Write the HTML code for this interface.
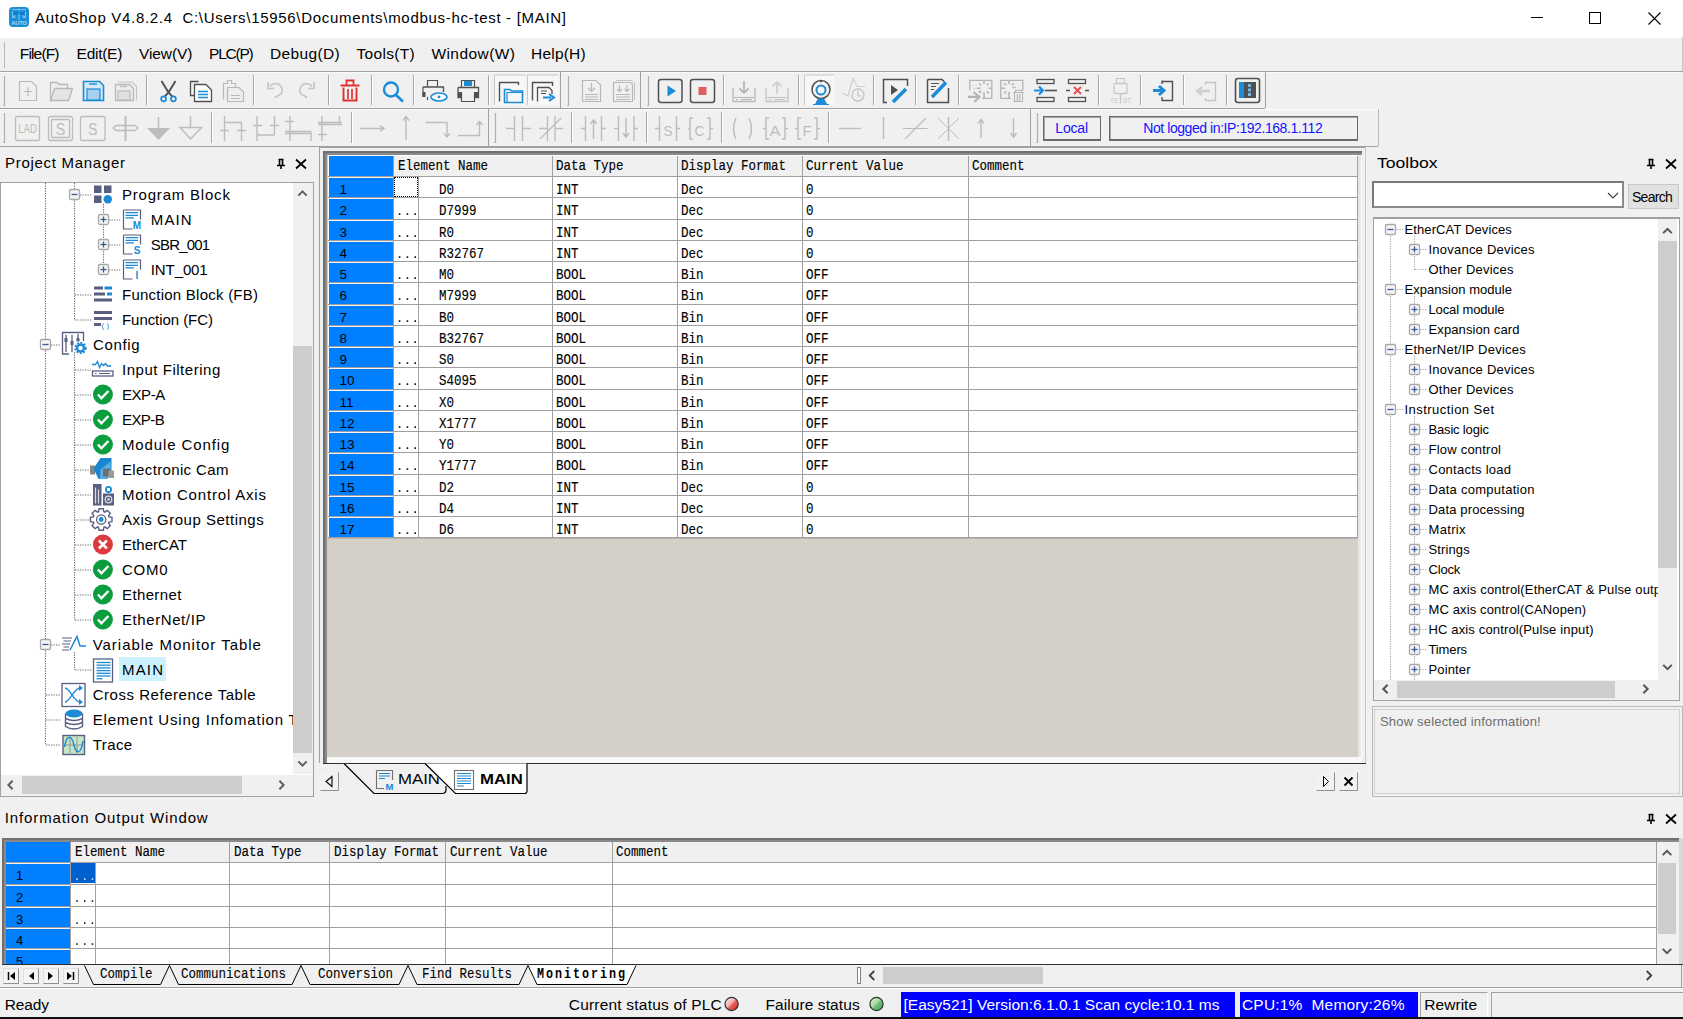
<!DOCTYPE html><html><head><meta charset="utf-8"><style>
html,body{margin:0;padding:0;width:1683px;height:1019px;overflow:hidden;background:#f0f0f0;position:relative;font-family:"Liberation Sans",sans-serif;}
.t{position:absolute;white-space:pre;line-height:1;color:#000;}
svg{overflow:visible;position:absolute}
</style></head><body>
<div style="position:absolute;left:0px;top:0px;width:1683px;height:38px;background:#fff"></div>
<svg style="left:9px;top:7px" width="20" height="20"><rect x="0" y="0" width="20" height="20" rx="4" fill="#1c8fd8"/><path d="M3 2.5H17M10 1.5V4M3.5 4.5V10.5H6.5M16.5 4.5V10.5H13.5M4 10.5L6.5 8.5M16 10.5L13.5 8.5M10 7V13" stroke="#6ec0ee" stroke-width="1.2" fill="none"/><rect x="5" y="5" width="4" height="3" fill="#0d7cc8"/><rect x="11" y="5" width="4.5" height="3" fill="#0d7cc8"/><text x="10" y="18" text-anchor="middle" font-family="Liberation Sans" font-weight="bold" font-size="5.5" fill="#a8daf6">AUTO</text></svg>
<div class="t" style="left:35.00px;top:10.10px;font-size:15px;letter-spacing:0.693px;">AutoShop V4.8.2.4  C:\Users\15956\Documents\modbus-hc-test - [MAIN]</div>
<div style="position:absolute;left:1531px;top:17px;width:12px;height:1px;background:#000"></div>
<div style="position:absolute;left:1589px;top:12px;width:10px;height:10px;border:1px solid #000"></div>
<svg style="left:1648px;top:12px" width="13" height="13"><path d="M0.5 0.5L12.5 12.5M12.5 0.5L0.5 12.5" stroke="#000" stroke-width="1.1"/></svg>
<div style="position:absolute;left:4px;top:42px;width:1px;height:26px;background:#b8b8b8"></div>
<div class="t" style="left:19.80px;top:46.28px;font-size:15.5px;letter-spacing:-0.849px;">File(F)</div>
<div class="t" style="left:76.60px;top:46.28px;font-size:15.5px;letter-spacing:-0.275px;">Edit(E)</div>
<div class="t" style="left:139.00px;top:46.28px;font-size:15.5px;letter-spacing:-0.086px;">View(V)</div>
<div class="t" style="left:209.00px;top:46.28px;font-size:15.5px;letter-spacing:-1.208px;">PLC(P)</div>
<div class="t" style="left:270.00px;top:46.28px;font-size:15.5px;letter-spacing:0.358px;">Debug(D)</div>
<div class="t" style="left:356.50px;top:46.28px;font-size:15.5px;letter-spacing:0.306px;">Tools(T)</div>
<div class="t" style="left:431.40px;top:46.28px;font-size:15.5px;letter-spacing:0.443px;">Window(W)</div>
<div class="t" style="left:531.00px;top:46.28px;font-size:15.5px;letter-spacing:0.217px;">Help(H)</div>
<div style="position:absolute;left:1682px;top:37px;width:1px;height:34px;background:#c8c8c8"></div>
<div style="position:absolute;left:0px;top:71px;width:1683px;height:1px;background:#a0a0a0"></div>
<div style="position:absolute;left:0px;top:72px;width:1683px;height:1px;background:#fafafa"></div>
<div style="position:absolute;left:0px;top:108px;width:1265px;height:1px;background:#a0a0a0"></div>
<div style="position:absolute;left:0px;top:109px;width:1265px;height:1px;background:#fafafa"></div>
<div style="position:absolute;left:1265px;top:109px;width:114px;height:1px;background:#fcfcfc"></div>
<div style="position:absolute;left:1378px;top:109px;width:1px;height:37px;background:#b8b8b8"></div>
<div style="position:absolute;left:0px;top:146px;width:1378px;height:1px;background:#a0a0a0"></div>
<svg style="left:0;top:0" width="1683" height="1019" viewBox="0 0 1683 1019"><path d="M4.5 76V106M3 105.5H5" stroke="#b0b0b0" stroke-width="1.2"/><path d="M19.5 81.5H31.5L36.5 86.5V100.5H19.5Z" fill="none" stroke="#b8b8b8" stroke-width="1.2"/><path d="M28 87V96M23.5 91.5H32.5" stroke="#b8b8b8" stroke-width="1.2"/><path d="M50.5 100.5V82.5H57l2 2H67.5V88" fill="none" stroke="#b8b8b8" stroke-width="1.3"/><path d="M50.5 100.5L54.5 88.5H72.5L68.5 100.5Z" fill="#e4e4e4" stroke="#b8b8b8" stroke-width="1.3"/><path d="M83.5 81.5H99.5L103.5 85.5V100.5H83.5Z" fill="#d7e9f7" stroke="#1a8cd8" stroke-width="1.6"/><rect x="87" y="89" width="13" height="11" fill="#a9d0f0" stroke="#1a8cd8" stroke-width="1.2"/><path d="M89 84H97" stroke="#1a8cd8" stroke-width="1.4"/><path d="M118 82H132L136.5 86.5V100.5" fill="none" stroke="#c4c4c4" stroke-width="1.1"/><path d="M115.5 84.5H129.5L133.5 88.5V100.5H115.5Z" fill="#ececec" stroke="#b8b8b8" stroke-width="1.3"/><rect x="118" y="91" width="12" height="9" fill="#e0e0e0" stroke="#b8b8b8" stroke-width="1.1"/><path d="M120 86.5H127" stroke="#b8b8b8" stroke-width="1.2"/><path d="M146.5 75V105" stroke="#a8a8a8" stroke-width="1"/><path d="M147.5 75V105" stroke="#fff" stroke-width="1"/><path d="M161.5 81L168.5 92.5L164.8 96.5M175.5 81L168.5 92.5L172.2 96.5" fill="none" stroke="#505050" stroke-width="1.9"/><circle cx="163.6" cy="98.8" r="2.5" fill="none" stroke="#1a8cd8" stroke-width="1.7"/><circle cx="173.4" cy="98.8" r="2.5" fill="none" stroke="#1a8cd8" stroke-width="1.7"/><path d="M198.5 81.5H190.5V95.5H194" fill="none" stroke="#505050" stroke-width="1.3"/><path d="M194.5 84.5H206L211.5 90V101.5H194.5Z" fill="#fff" stroke="#505050" stroke-width="1.3"/><path d="M198 91.5H208M198 94.5H208M198 97.5H208" stroke="#1a8cd8" stroke-width="1.3"/><path d="M223.5 99.5V83.5H227.5V80.5H231.5V83.5H235.5V87" fill="none" stroke="#b8b8b8" stroke-width="1.2"/><path d="M227.5 87.5H239L243.5 92V101.5H227.5Z" fill="#eee" stroke="#b8b8b8" stroke-width="1.2"/><path d="M231 95.5H240M231 98.5H240" stroke="#b8b8b8" stroke-width="1.1"/><path d="M253.5 75V105" stroke="#a8a8a8" stroke-width="1"/><path d="M254.5 75V105" stroke="#fff" stroke-width="1"/><path d="M275 97.5L281 94A6.5 6.5 0 1 0 270 86.5" fill="none" stroke="#c4c4c4" stroke-width="1.6"/><path d="M268 82V88.5H274" fill="none" stroke="#c4c4c4" stroke-width="1.6"/><path d="M307 97.5L301 94A6.5 6.5 0 1 1 312 86.5" fill="none" stroke="#c4c4c4" stroke-width="1.6"/><path d="M314 82V88.5H308" fill="none" stroke="#c4c4c4" stroke-width="1.6"/><path d="M328.5 75V105" stroke="#a8a8a8" stroke-width="1"/><path d="M329.5 75V105" stroke="#fff" stroke-width="1"/><path d="M340.5 85.5H359.5M346.5 85V80.5H353.5V85" fill="none" stroke="#dd3333" stroke-width="1.8"/><path d="M343.5 87.5V100.5H356.5V87.5" fill="none" stroke="#dd3333" stroke-width="1.9"/><path d="M348 89V99M352 89V99" stroke="#dd3333" stroke-width="1.7"/><path d="M371.5 75V105" stroke="#a8a8a8" stroke-width="1"/><path d="M372.5 75V105" stroke="#fff" stroke-width="1"/><circle cx="391" cy="89.5" r="7" fill="none" stroke="#1a8cd8" stroke-width="2.4"/><path d="M396 95L403 101.5" stroke="#1a8cd8" stroke-width="2.6"/><path d="M413.5 75V105" stroke="#a8a8a8" stroke-width="1"/><path d="M414.5 75V105" stroke="#fff" stroke-width="1"/><path d="M427.5 86.5V80.5H437.5V86.5" fill="none" stroke="#505050" stroke-width="1.2"/><path d="M423 87H443.5V92" fill="none" stroke="#505050" stroke-width="1.3"/><rect x="422.5" y="92" width="3" height="5" fill="#505050"/><path d="M423 87V97M427.5 97V100" stroke="#505050" stroke-width="1.2"/><ellipse cx="439" cy="97" rx="8" ry="4" fill="#fff" stroke="#1a8cd8" stroke-width="1.6"/><circle cx="439" cy="97" r="1.4" fill="#1a8cd8"/><path d="M461.5 87V80.5H474.5V87" fill="none" stroke="#505050" stroke-width="1.2"/><rect x="464" y="81" width="8" height="5" fill="#1a8cd8"/><path d="M458 87.5H478.5V97.5H474.5M458 87.5V97.5H461.5" fill="none" stroke="#505050" stroke-width="1.3"/><rect x="458" y="92" width="4" height="5" fill="#505050"/><rect x="474" y="92" width="4" height="5" fill="#505050"/><path d="M461.5 93V101.5H474.5V93" fill="none" stroke="#505050" stroke-width="1.2"/><path d="M488.5 75V105" stroke="#a8a8a8" stroke-width="1"/><path d="M489.5 75V105" stroke="#fff" stroke-width="1"/><rect x="494.5" y="74.5" width="31" height="31" fill="#f7f7f7" stroke="none"/><path d="M494.5 105V75H525" fill="none" stroke="#c8c8c8" stroke-width="1"/><rect x="527.5" y="74.5" width="31" height="31" fill="#f7f7f7" stroke="none"/><path d="M527.5 105V75H558" fill="none" stroke="#c8c8c8" stroke-width="1"/><path d="M499.5 101.5V82.5H518.5V85" fill="none" stroke="#505050" stroke-width="1.4"/><path d="M504.5 102.5V89.5H510l1.5 1.5H522.5V102.5Z" fill="none" stroke="#1a8cd8" stroke-width="1.6"/><path d="M507 102V92.5H522" fill="none" stroke="#1a8cd8" stroke-width="1.2"/><path d="M532.5 100.5V82.5H552.5V86" fill="none" stroke="#505050" stroke-width="1.4"/><path d="M537.5 101.5V87.5H549L552 90.5V94" fill="none" stroke="#505050" stroke-width="1.3"/><path d="M541 91H547M541 93.5H546" stroke="#505050" stroke-width="1"/><path d="M543 97.5H551M549 94L554 97.5L549 101" fill="none" stroke="#1a8cd8" stroke-width="2"/><path d="M560.5 72V108" stroke="#a0a0a0"/><path d="M568.5 76V106M567 105.5H569" stroke="#b0b0b0" stroke-width="1.2"/><path d="M582.5 80.5H596L600.5 85V101.5H582.5Z" fill="none" stroke="#b8b8b8" stroke-width="1.2"/><path d="M591.5 83V91M588 88L591.5 91.5L595 88" fill="none" stroke="#b8b8b8" stroke-width="1.2"/><path d="M585 94.5H598M585 97H598M585 99.5H598" stroke="#b8b8b8" stroke-width="1"/><path d="M616 80.5H632L634.5 83V100" fill="none" stroke="#c4c4c4" stroke-width="1"/><path d="M613.5 82.5H630.5L632.5 84.5V101.5H613.5Z" fill="none" stroke="#b8b8b8" stroke-width="1.2"/><path d="M619.5 85V91M617 89L619.5 91.5L622 89M627 85V91M624.5 89L627 91.5L629.5 89" fill="none" stroke="#b8b8b8" stroke-width="1.1"/><path d="M616 94.5H630M616 97H630M616 99.5H630" stroke="#b8b8b8" stroke-width="1"/><path d="M640.5 72V108" stroke="#a0a0a0"/><path d="M648.5 76V106M647 105.5H649" stroke="#b0b0b0" stroke-width="1.2"/><rect x="658.5" y="79.5" width="23.5" height="23" rx="2.5" fill="none" stroke="#505050" stroke-width="1.5"/><path d="M667.5 85.5V96.5L676 91Z" fill="#1a8cd8"/><rect x="690.5" y="79.5" width="24" height="23" rx="2.5" fill="none" stroke="#505050" stroke-width="1.5"/><rect x="698.5" y="87" width="8" height="8" fill="#e06060"/><path d="M723.5 75V105" stroke="#a8a8a8" stroke-width="1"/><path d="M724.5 75V105" stroke="#fff" stroke-width="1"/><path d="M733 88V101.5H755V88" fill="none" stroke="#b8b8b8" stroke-width="1.3"/><path d="M733 97.5H755" stroke="#b8b8b8" stroke-width="1.1"/><path d="M736 99.5H738M741 99.5H752" stroke="#b8b8b8" stroke-width="1.2"/><path d="M744 81V93M739.5 88.5L744 93L748.5 88.5" fill="none" stroke="#b8b8b8" stroke-width="1.8"/><path d="M766 88V101.5H788V88" fill="none" stroke="#c4c4c4" stroke-width="1.3"/><path d="M766 97.5H788" stroke="#c4c4c4" stroke-width="1.1"/><path d="M769 99.5H771M774 99.5H785" stroke="#c4c4c4" stroke-width="1.2"/><path d="M777 94V82M772.5 86.5L777 82L781.5 86.5" fill="none" stroke="#d0d0d0" stroke-width="1.8"/><path d="M798.5 75V105" stroke="#a8a8a8" stroke-width="1"/><path d="M799.5 75V105" stroke="#fff" stroke-width="1"/><rect x="804.5" y="74.5" width="30" height="31" fill="#f7f7f7"/><path d="M804.5 105V75H834" fill="none" stroke="#c8c8c8"/><circle cx="821" cy="89.5" r="9" fill="none" stroke="#505050" stroke-width="1.5"/><circle cx="821" cy="90" r="4.5" fill="none" stroke="#1a8cd8" stroke-width="2"/><circle cx="821" cy="81.5" r="1" fill="#505050"/><path d="M818 98.5H824L827 104H815Z" fill="#1a8cd8"/><path d="M813 104.5H829" stroke="#1a8cd8" stroke-width="1"/><path d="M842 93L848 96L853 78.5L857 86.5H865" fill="none" stroke="#d0d0d0" stroke-width="1.2"/><circle cx="858" cy="95" r="6" fill="#f0f0f0" stroke="#c4c4c4" stroke-width="1.4"/><path d="M858 91V96H861.5" fill="none" stroke="#c4c4c4" stroke-width="1.2"/><path d="M873.5 75V105" stroke="#a8a8a8" stroke-width="1"/><path d="M874.5 75V105" stroke="#fff" stroke-width="1"/><path d="M887 102.5H883.5V79.5H907.5V86" fill="none" stroke="#505050" stroke-width="1.5"/><path d="M891 85V95L898 90Z" fill="#505050"/><path d="M893 102L906 89" stroke="#1a8cd8" stroke-width="3.5"/><path d="M915.5 75V105" stroke="#a8a8a8" stroke-width="1"/><path d="M916.5 75V105" stroke="#fff" stroke-width="1"/><path d="M927.5 79.5H942L944.5 82M948.5 88V102.5H927.5V79.5" fill="none" stroke="#505050" stroke-width="1.5"/><path d="M931 83.5H939M931 86.5H936M931 89.5H934" stroke="#505050" stroke-width="1"/><path d="M932 97L946 82.5" stroke="#1a8cd8" stroke-width="3.5"/><path d="M958.5 75V105" stroke="#a8a8a8" stroke-width="1"/><path d="M959.5 75V105" stroke="#fff" stroke-width="1"/><path d="M969.8 90.5V80.3H991.8V98.3H982" fill="none" stroke="#b4b4b4" stroke-width="1.3"/><path d="M984 80.5V84M984 92V98M977 88.2H980.5M988.5 88.2H992M979.2 83.2L981.2 85.2M988.8 83.2L986.8 85.2M986.8 91.2L988.8 93.4" stroke="#b4b4b4" stroke-width="1.5"/><path d="M973 85.5h1.2M973 88.5h1.2M975.5 85.5h1M975.5 88.5h1" stroke="#c8c8c8" stroke-width="1"/><path d="M968 96.8H978.5M973.5 92L979.5 96.8L974.5 101.8M979 92.5L981 91" fill="none" stroke="#b4b4b4" stroke-width="2.2"/><path d="M1011 98.3H1000.8V80.3H1022.8V90.5" fill="none" stroke="#b4b4b4" stroke-width="1.3"/><path d="M1009 80.5V84M1009 92V98M1001.5 88.2H1005M1004.2 83.2L1006.2 85.2M1013.8 83.2L1011.8 85.2M1004.2 93.4L1006.2 91.2M1012.5 87.5H1015.5" stroke="#b4b4b4" stroke-width="1.5"/><path d="M1013 92.5H1024M1015.5 92V90.3H1021.5V92M1014.5 93V101.5H1022.5V93M1017.3 94V101M1019.7 94V101" fill="none" stroke="#b4b4b4" stroke-width="1.1"/><rect x="1037" y="79.5" width="17" height="4" fill="none" stroke="#505050" stroke-width="1.3"/><rect x="1037" y="97.5" width="17" height="4" fill="none" stroke="#505050" stroke-width="1.3"/><path d="M1045 90.5H1057" stroke="#505050" stroke-width="1.6"/><path d="M1034 90.5H1042M1039 86.5L1043 90.5L1039 94.5" fill="none" stroke="#1a8cd8" stroke-width="2.2"/><rect x="1068.5" y="79.5" width="17" height="4" fill="none" stroke="#505050" stroke-width="1.3"/><rect x="1068.5" y="97.5" width="17" height="4" fill="none" stroke="#505050" stroke-width="1.3"/><path d="M1066 90.5H1070M1085 90.5H1089" stroke="#505050" stroke-width="1.6"/><path d="M1074 87L1081 94M1081 87L1074 94" stroke="#e05050" stroke-width="2"/><path d="M1098.5 75V105" stroke="#a8a8a8" stroke-width="1"/><path d="M1099.5 75V105" stroke="#fff" stroke-width="1"/><rect x="1116.5" y="78.5" width="8" height="5" fill="none" stroke="#c8c8c8" stroke-width="1.1"/><rect x="1114" y="83.5" width="13" height="10" rx="1" fill="none" stroke="#c8c8c8" stroke-width="1.3"/><path d="M1120.5 94V103.5" stroke="#c8c8c8" stroke-width="1.4"/><text x="1110" y="103" font-family="Liberation Sans" font-size="6.5" fill="#c8c8c8">TE</text><text x="1123" y="103" font-family="Liberation Sans" font-size="6.5" fill="#c8c8c8">ST</text><path d="M1140.5 75V105" stroke="#a8a8a8" stroke-width="1"/><path d="M1141.5 75V105" stroke="#fff" stroke-width="1"/><path d="M1162 81.5H1172.5V100.5H1162M1162 80.5V84M1162 97V101" fill="none" stroke="#505050" stroke-width="1.4"/><path d="M1153 90.5H1162M1159 86L1164 90.5L1159 95" fill="none" stroke="#1a8cd8" stroke-width="3"/><path d="M1183.5 75V105" stroke="#a8a8a8" stroke-width="1"/><path d="M1184.5 75V105" stroke="#fff" stroke-width="1"/><path d="M1205.5 82.5H1215.5V100.5H1205.5M1205.5 82V85M1205.5 98V101" fill="none" stroke="#c4c4c4" stroke-width="1.3"/><path d="M1198 91H1210M1202 87L1197.5 91L1202 95" fill="none" stroke="#d0d0d0" stroke-width="3"/><path d="M1226.5 75V105" stroke="#a8a8a8" stroke-width="1"/><path d="M1227.5 75V105" stroke="#fff" stroke-width="1"/><rect x="1235.5" y="78.5" width="24" height="24" rx="2.5" fill="none" stroke="#505050" stroke-width="1.6"/><rect x="1239" y="82" width="5" height="16" fill="#1a8cd8"/><rect x="1244" y="82" width="12" height="16" fill="#505050"/><rect x="1248" y="84" width="3" height="3" fill="#7ab8e6"/><rect x="1248" y="88.5" width="3" height="3" fill="#7ab8e6"/><rect x="1248" y="93" width="3" height="3" fill="#7ab8e6"/><path d="M1265.5 72V108" stroke="#a0a0a0"/><path d="M4.5 113V143M3 142.5H5" stroke="#b0b0b0" stroke-width="1.2"/><rect x="15.5" y="116.5" width="24" height="24" rx="2" fill="none" stroke="#bcbcbc" stroke-width="1.3"/><text x="18.3" y="133.3" font-family="Liberation Sans" font-size="13.5" fill="#bcbcbc" textLength="18.5" lengthAdjust="spacingAndGlyphs">LAD</text><rect x="48.5" y="116.5" width="24" height="24" rx="2" fill="none" stroke="#bcbcbc" stroke-width="1.3"/><rect x="51.5" y="119.5" width="18" height="18" rx="1" fill="none" stroke="#bcbcbc" stroke-width="1.3"/><text x="55.8" y="135" font-family="Liberation Sans" font-size="16" fill="#bcbcbc" textLength="9.5" lengthAdjust="spacingAndGlyphs">S</text><rect x="80.5" y="116.5" width="24.5" height="24" rx="2" fill="none" stroke="#bcbcbc" stroke-width="1.3"/><text x="88" y="135" font-family="Liberation Sans" font-size="16" fill="#bcbcbc" textLength="9.5" lengthAdjust="spacingAndGlyphs">S</text><path d="M125.5 116V141" stroke="#bcbcbc" stroke-width="2"/><path d="M113 128L116 125.5H135L138 128L135 130.5H116Z" fill="#f0f0f0" stroke="#bcbcbc" stroke-width="1.3"/><path d="M125.5 125V131" stroke="#bcbcbc" stroke-width="2"/><path d="M158.5 117V128" stroke="#bcbcbc" stroke-width="1.5"/><path d="M147 128H170L158.5 140Z" fill="#bcbcbc"/><path d="M190.5 116V127.5" stroke="#bcbcbc" stroke-width="1.5"/><path d="M180 127.5H201.5L190.5 139Z" fill="none" stroke="#bcbcbc" stroke-width="1.5"/><path d="M211.5 112V143" stroke="#a8a8a8" stroke-width="1"/><path d="M212.5 112V143" stroke="#fff" stroke-width="1"/><path d="M224.5 116V141M241.5 122V141M224.5 122.5H241.5M220 130.5H229M237 130.5H246" fill="none" stroke="#bcbcbc" stroke-width="1.4"/><path d="M257 116V141M274.5 116V135M257 135H274.5M253 125.5H262M270 125.5H279" fill="none" stroke="#bcbcbc" stroke-width="1.4"/><path d="M290 116V141M311 131.5V141M285 131.5H311M285 133.5H311M285 121.5H294" fill="none" stroke="#bcbcbc" stroke-width="1.4"/><path d="M322 116V141M339.5 116V122M318 122.5H342M318 124.5H342M318 134.5H327" fill="none" stroke="#bcbcbc" stroke-width="1.4"/><path d="M351.5 112V143" stroke="#a8a8a8" stroke-width="1"/><path d="M352.5 112V143" stroke="#fff" stroke-width="1"/><path d="M360 128.5H384M380 125.5L384 128.5L380 131.5" fill="none" stroke="#bcbcbc" stroke-width="1.4"/><path d="M406 140V116.5M403 120.5L406 116.5L409 120.5" fill="none" stroke="#bcbcbc" stroke-width="1.4"/><path d="M425.5 122.5H447V137M444 133.5L447 137L450 133.5" fill="none" stroke="#bcbcbc" stroke-width="1.4"/><path d="M458 135.5H479.5V122M476.5 125L479.5 121.5L482.5 125" fill="none" stroke="#bcbcbc" stroke-width="1.4"/><path d="M488.5 109V146" stroke="#a0a0a0"/><path d="M495.5 113V143M494 142.5H496" stroke="#b0b0b0" stroke-width="1.2"/><path d="M514.5 116V141M522.5 116V141M506 128.5H514.5M522.5 128.5H531" fill="none" stroke="#bcbcbc" stroke-width="1.4"/><path d="M547.5 116V141M555 116V141M539 128.5H547.5M555 128.5H563M540 139L561 118" fill="none" stroke="#bcbcbc" stroke-width="1.3"/><path d="M571.5 112V143" stroke="#a8a8a8" stroke-width="1"/><path d="M572.5 112V143" stroke="#fff" stroke-width="1"/><path d="M585.5 116V141M601.5 116V141M581 128.5H585.5M601.5 128.5H606M593.5 139V120M590.5 124L593.5 120L596.5 124" fill="none" stroke="#bcbcbc" stroke-width="1.4"/><path d="M618.5 116V141M634 116V141M614 128.5H618.5M634 128.5H638M626 118V137M623 133L626 137L629 133" fill="none" stroke="#bcbcbc" stroke-width="1.4"/><path d="M646.5 112V143" stroke="#a8a8a8" stroke-width="1"/><path d="M647.5 112V143" stroke="#fff" stroke-width="1"/><path d="M659.5 116V141M676.5 116V141M655 128.5H659.5M676.5 128.5H680" fill="none" stroke="#bcbcbc" stroke-width="1.4"/><text x="663.5" y="135.5" font-family="Liberation Sans" font-size="15" fill="#bcbcbc" textLength="9" lengthAdjust="spacingAndGlyphs">S</text><path d="M693 118H690V139H693M707 118H710V139H707M688 128.5H690M710 128.5H713" fill="none" stroke="#bcbcbc" stroke-width="1.4"/><text x="694.5" y="135.5" font-family="Liberation Sans" font-size="15" fill="#bcbcbc" textLength="10" lengthAdjust="spacingAndGlyphs">C</text><path d="M721.5 112V143" stroke="#a8a8a8" stroke-width="1"/><path d="M722.5 112V143" stroke="#fff" stroke-width="1"/><path d="M736 118Q731 128.5 736 139M749 118Q754 128.5 749 139" fill="none" stroke="#bcbcbc" stroke-width="1.4"/><path d="M769 118H766V139H769M782 118H785V139H782M763 128.5H766M785 128.5H788" fill="none" stroke="#bcbcbc" stroke-width="1.4"/><text x="769.5" y="135.5" font-family="Liberation Sans" font-size="15" fill="#bcbcbc" textLength="11" lengthAdjust="spacingAndGlyphs">A</text><path d="M801 118H798V139H801M814 118H817V139H814M795 128.5H798M817 128.5H820" fill="none" stroke="#bcbcbc" stroke-width="1.4"/><text x="802.5" y="135.5" font-family="Liberation Sans" font-size="15" fill="#bcbcbc" textLength="9" lengthAdjust="spacingAndGlyphs">F</text><path d="M828.5 112V143" stroke="#a8a8a8" stroke-width="1"/><path d="M829.5 112V143" stroke="#fff" stroke-width="1"/><path d="M839 128.5H861" stroke="#bcbcbc" stroke-width="1.4"/><path d="M883.5 117V139" stroke="#bcbcbc" stroke-width="1.4"/><path d="M903 128.5H927.5M905 139L926 118" fill="none" stroke="#bcbcbc" stroke-width="1.2"/><path d="M948.5 117V141M938 118L959 139M959 118L938 139" fill="none" stroke="#bcbcbc" stroke-width="1.0"/><path d="M948.5 117V141" stroke="#bcbcbc" stroke-width="1.4"/><path d="M981 138V120M978 123.5L981 119.5L984 123.5" fill="none" stroke="#bcbcbc" stroke-width="1.4"/><path d="M1013.5 118V136.5M1010.5 133L1013.5 137L1016.5 133" fill="none" stroke="#bcbcbc" stroke-width="1.4"/><path d="M1030.5 109V146" stroke="#a0a0a0"/><path d="M1037.5 113V143M1036 142.5H1038" stroke="#b0b0b0" stroke-width="1.2"/></svg>
<div style="position:absolute;left:1043px;top:116px;width:58px;height:25px;border:1.3px solid #6a6a6a;border-bottom:2px solid #6a6a6a;box-shadow:inset 1px 1px 0 #a8a8a8;box-sizing:border-box;background:#f0f0f0"></div>
<div class="t" style="left:1055.30px;top:121.25px;font-size:14px;letter-spacing:-0.190px;color:#1414ff;">Local</div>
<div style="position:absolute;left:1109px;top:116px;width:249px;height:25px;border:1.3px solid #6a6a6a;border-bottom:2px solid #6a6a6a;box-shadow:inset 1px 1px 0 #a8a8a8;box-sizing:border-box;background:#f0f0f0"></div>
<div class="t" style="left:1143.30px;top:121.45px;font-size:14px;letter-spacing:-0.435px;color:#1414ff;">Not logged in:IP:192.168.1.112</div>
<div class="t" style="left:5.00px;top:155.00px;font-size:15px;letter-spacing:0.713px;">Project Manager</div>
<svg style="left:0;top:0" width="1683" height="1019" viewBox="0 0 1683 1019"><path d="M278.5 159.5H283.5M279.5 160V165M282.5 160V165M277 165.5H285M281 165.5V169" fill="none" stroke="#000" stroke-width="1.6"/><path d="M296 159.5L306 168.5M306 159.5L296 168.5" stroke="#000" stroke-width="1.8"/></svg>
<div style="position:absolute;left:0px;top:182px;width:314px;height:615px;border:1px solid #a0a0a0;box-sizing:border-box;background:#fff"></div>
<div style="position:absolute;left:293px;top:183px;width:20px;height:591px;background:#f0f0f0"></div>
<div style="position:absolute;left:293px;top:346px;width:19px;height:407px;background:#cdcdcd"></div>
<div style="position:absolute;left:1px;top:775px;width:312px;height:21px;background:#f0f0f0"></div>
<div style="position:absolute;left:22px;top:776px;width:220px;height:18px;background:#cdcdcd"></div>
<svg style="left:0;top:0" width="1683" height="1019" viewBox="0 0 1683 1019"><path d="M298.3 195.6L302.5 191.4L306.7 195.6" fill="none" stroke="#606060" stroke-width="2"/><path d="M298.3 761.4L302.5 765.6L306.7 761.4" fill="none" stroke="#606060" stroke-width="2"/><path d="M12.6 780.8L8.4 785L12.6 789.2" fill="none" stroke="#606060" stroke-width="2"/><path d="M279.4 780.8L283.6 785L279.4 789.2" fill="none" stroke="#606060" stroke-width="2"/></svg>
<div style="position:absolute;left:119px;top:657px;width:47px;height:24px;background:#ccf2ff"></div>
<div style="position:absolute;left:1px;top:183px;width:292px;height:591px;overflow:hidden">
<svg style="left:-1px;top:-183px" width="1683" height="1019" viewBox="0 0 1683 1019"><path d="M45.5 183V745" stroke="#6a6a6a" stroke-width="1.1" stroke-dasharray="1.25 1.25"/><path d="M74.5 183V320" stroke="#6a6a6a" stroke-width="1.1" stroke-dasharray="1.25 1.25"/><path d="M74.5 352V620" stroke="#6a6a6a" stroke-width="1.1" stroke-dasharray="1.25 1.25"/><path d="M74.5 652V670" stroke="#6a6a6a" stroke-width="1.1" stroke-dasharray="1.25 1.25"/><path d="M103.5 204V270" stroke="#6a6a6a" stroke-width="1.1" stroke-dasharray="1.25 1.25"/><path d="M75 195.0H92" stroke="#6a6a6a" stroke-width="1.1" stroke-dasharray="1.25 1.25"/><path d="M75 295.0H92" stroke="#6a6a6a" stroke-width="1.1" stroke-dasharray="1.25 1.25"/><path d="M75 320.0H92" stroke="#6a6a6a" stroke-width="1.1" stroke-dasharray="1.25 1.25"/><path d="M104 220.0H121" stroke="#6a6a6a" stroke-width="1.1" stroke-dasharray="1.25 1.25"/><path d="M104 245.0H121" stroke="#6a6a6a" stroke-width="1.1" stroke-dasharray="1.25 1.25"/><path d="M104 270.0H121" stroke="#6a6a6a" stroke-width="1.1" stroke-dasharray="1.25 1.25"/><path d="M75 370.0H91" stroke="#6a6a6a" stroke-width="1.1" stroke-dasharray="1.25 1.25"/><path d="M75 395.0H91" stroke="#6a6a6a" stroke-width="1.1" stroke-dasharray="1.25 1.25"/><path d="M75 420.0H91" stroke="#6a6a6a" stroke-width="1.1" stroke-dasharray="1.25 1.25"/><path d="M75 445.0H91" stroke="#6a6a6a" stroke-width="1.1" stroke-dasharray="1.25 1.25"/><path d="M75 470.0H91" stroke="#6a6a6a" stroke-width="1.1" stroke-dasharray="1.25 1.25"/><path d="M75 495.0H91" stroke="#6a6a6a" stroke-width="1.1" stroke-dasharray="1.25 1.25"/><path d="M75 520.0H91" stroke="#6a6a6a" stroke-width="1.1" stroke-dasharray="1.25 1.25"/><path d="M75 545.0H91" stroke="#6a6a6a" stroke-width="1.1" stroke-dasharray="1.25 1.25"/><path d="M75 570.0H91" stroke="#6a6a6a" stroke-width="1.1" stroke-dasharray="1.25 1.25"/><path d="M75 595.0H91" stroke="#6a6a6a" stroke-width="1.1" stroke-dasharray="1.25 1.25"/><path d="M75 620.0H91" stroke="#6a6a6a" stroke-width="1.1" stroke-dasharray="1.25 1.25"/><path d="M75 670.0H92" stroke="#6a6a6a" stroke-width="1.1" stroke-dasharray="1.25 1.25"/><path d="M46 345.0H61" stroke="#6a6a6a" stroke-width="1.1" stroke-dasharray="1.25 1.25"/><path d="M46 645.0H61" stroke="#6a6a6a" stroke-width="1.1" stroke-dasharray="1.25 1.25"/><path d="M46 695.0H61" stroke="#6a6a6a" stroke-width="1.1" stroke-dasharray="1.25 1.25"/><path d="M46 720.0H61" stroke="#6a6a6a" stroke-width="1.1" stroke-dasharray="1.25 1.25"/><path d="M46 745.0H61" stroke="#6a6a6a" stroke-width="1.1" stroke-dasharray="1.25 1.25"/><rect x="69.5" y="189.5" width="10" height="10" rx="1.5" fill="#f4f4f4" stroke="#a8a8a8" stroke-width="1.3"/><path d="M71.5 194.5H77.5" stroke="#3c5a9a" stroke-width="1.3"/><rect x="98.5" y="214.5" width="10" height="10" rx="1.5" fill="#f4f4f4" stroke="#a8a8a8" stroke-width="1.3"/><path d="M100.5 219.5H106.5" stroke="#3c5a9a" stroke-width="1.3"/><path d="M103.5 216.5V222.5" stroke="#3c5a9a" stroke-width="1.3"/><rect x="98.5" y="239.5" width="10" height="10" rx="1.5" fill="#f4f4f4" stroke="#a8a8a8" stroke-width="1.3"/><path d="M100.5 244.5H106.5" stroke="#3c5a9a" stroke-width="1.3"/><path d="M103.5 241.5V247.5" stroke="#3c5a9a" stroke-width="1.3"/><rect x="98.5" y="264.5" width="10" height="10" rx="1.5" fill="#f4f4f4" stroke="#a8a8a8" stroke-width="1.3"/><path d="M100.5 269.5H106.5" stroke="#3c5a9a" stroke-width="1.3"/><path d="M103.5 266.5V272.5" stroke="#3c5a9a" stroke-width="1.3"/><rect x="40.5" y="339.5" width="10" height="10" rx="1.5" fill="#f4f4f4" stroke="#a8a8a8" stroke-width="1.3"/><path d="M42.5 344.5H48.5" stroke="#3c5a9a" stroke-width="1.3"/><rect x="40.5" y="639.5" width="10" height="10" rx="1.5" fill="#f4f4f4" stroke="#a8a8a8" stroke-width="1.3"/><path d="M42.5 644.5H48.5" stroke="#3c5a9a" stroke-width="1.3"/><rect x="94" y="185.5" width="7.5" height="7.5" fill="#5a5f82"/><rect x="104" y="185.5" width="7.5" height="7.5" fill="#5a5f82"/><rect x="94" y="195.5" width="7.5" height="7.5" fill="#5a5f82"/><circle cx="107.8" cy="199.3" r="4.2" fill="#1a8ad4"/><path d="M123.5 210.0H140.5V219.5M123.5 210.0V229.0H132.5" fill="none" stroke="#5a5f82" stroke-width="1.2"/><path d="M125.5 212.7H138M125.5 215.3H138M125.5 217.9H134" stroke="#1a8ad4" stroke-width="1.3"/><text x="137" y="229.0" text-anchor="middle" font-family="Liberation Sans" font-weight="bold" font-size="10" fill="#1a8ad4">M</text><path d="M123.5 235.0H140.5V244.5M123.5 235.0V254.0H132.5" fill="none" stroke="#5a5f82" stroke-width="1.2"/><path d="M125.5 237.7H138M125.5 240.3H138M125.5 242.9H134" stroke="#1a8ad4" stroke-width="1.3"/><text x="137" y="254.0" text-anchor="middle" font-family="Liberation Sans" font-weight="bold" font-size="10" fill="#1a8ad4">S</text><path d="M123.5 260.0H140.5V269.5M123.5 260.0V279.0H132.5" fill="none" stroke="#5a5f82" stroke-width="1.2"/><path d="M125.5 262.7H138M125.5 265.3H138M125.5 267.9H134" stroke="#1a8ad4" stroke-width="1.3"/><text x="137" y="279.0" text-anchor="middle" font-family="Liberation Sans" font-weight="bold" font-size="10" fill="#1a8ad4">I</text><rect x="94" y="286.5" width="9" height="3" fill="#5a5f82"/><rect x="104.5" y="286.5" width="7.5" height="3" fill="#1a8ad4"/><rect x="94" y="292.5" width="11" height="3" fill="#5a5f82"/><rect x="107" y="292.5" width="5" height="3" fill="#1a8ad4"/><rect x="94" y="298.5" width="18" height="3" fill="#5a5f82"/><rect x="94" y="311.0" width="18" height="3" fill="#5a5f82"/><rect x="94" y="317.0" width="18" height="3" fill="#5a5f82"/><rect x="94" y="323.0" width="7" height="3" fill="#5a5f82"/><text x="101.5" y="328.0" font-family="Liberation Sans" font-size="8" fill="#1a8ad4">( )</text><path d="M69 354.0H62.5V332.5H83.5V341.0" fill="none" stroke="#5a5f82" stroke-width="1.3"/><path d="M66 335.0V352.0M72 335.0V352.0M78 334.0V341.0" stroke="#5a5f82" stroke-width="1.3"/><rect x="64.5" y="338.0" width="3" height="4" fill="#5a5f82"/><rect x="70.5" y="341.0" width="3" height="4" fill="#5a5f82"/><rect x="76.5" y="338.0" width="3" height="3.5" fill="#5a5f82"/><circle cx="80.5" cy="348.0" r="4.6" fill="none" stroke="#1a8ad4" stroke-width="3" stroke-dasharray="1.8 1.2"/><circle cx="80.5" cy="348.0" r="3.4" fill="none" stroke="#1a8ad4" stroke-width="2.2"/><path d="M92 364.5H95.5L97.5 361.5L99.5 367.5L101.5 363.5L103.5 365.5L105.5 363.5L107.5 366.0H111" fill="none" stroke="#1a8ad4" stroke-width="1.3"/><rect x="92.5" y="371.0" width="20.5" height="5" fill="none" stroke="#5a5f82" stroke-width="1.3"/><path d="M95 373.5H96.5M99 373.5H110" stroke="#5a5f82" stroke-width="1"/><circle cx="102.9" cy="394.5" r="10" fill="#0c9d3e"/><path d="M97.9 394.5L101.4 398.3L108.4 391.0" fill="none" stroke="#fff" stroke-width="2.4"/><circle cx="102.9" cy="419.5" r="10" fill="#0c9d3e"/><path d="M97.9 419.5L101.4 423.3L108.4 416.0" fill="none" stroke="#fff" stroke-width="2.4"/><circle cx="102.9" cy="444.5" r="10" fill="#0c9d3e"/><path d="M97.9 444.5L101.4 448.3L108.4 441.0" fill="none" stroke="#fff" stroke-width="2.4"/><circle cx="102.9" cy="569.5" r="10" fill="#0c9d3e"/><path d="M97.9 569.5L101.4 573.3L108.4 566.0" fill="none" stroke="#fff" stroke-width="2.4"/><circle cx="102.9" cy="594.5" r="10" fill="#0c9d3e"/><path d="M97.9 594.5L101.4 598.3L108.4 591.0" fill="none" stroke="#fff" stroke-width="2.4"/><circle cx="102.9" cy="619.5" r="10" fill="#0c9d3e"/><path d="M97.9 619.5L101.4 623.3L108.4 616.0" fill="none" stroke="#fff" stroke-width="2.4"/><circle cx="102.9" cy="544.5" r="10" fill="#dc3a3e"/><path d="M98.9 540.5L106.9 548.5M106.9 540.5L98.9 548.5" fill="none" stroke="#fff" stroke-width="2.6"/><rect x="90" y="465.5" width="5" height="9" fill="#858585"/><path d="M93.5 468.5L100.5 458.0H111.5V472.5L107 479.0H98.5Z" fill="#1a86d0"/><path d="M100.5 469.5L110.5 461.5V473.5L105.5 479.0H100Z" fill="#58b0e0"/><rect x="103" y="468.5" width="7" height="8" fill="#6e6e6e"/><rect x="108.5" y="470.5" width="5.5" height="7.5" fill="#9a9a9a"/><rect x="93" y="484.0" width="8.5" height="21.5" fill="#5a5f82"/><path d="M95.5 487.5V503.5M98.5 489.5V503.5" stroke="#d8dae6" stroke-width="1.2"/><rect x="103" y="493.5" width="11" height="12" fill="#5a5f82"/><circle cx="108.5" cy="499.5" r="3.3" fill="none" stroke="#e0e0e8" stroke-width="1.2"/><circle cx="108.5" cy="499.5" r="1.3" fill="#e0e0e8"/><circle cx="108.5" cy="489.5" r="2.6" fill="none" stroke="#1a8ad4" stroke-width="1.8"/><path d="M108.96 516.84L111.99 517.35L111.99 521.65L108.96 522.16L108.56 523.11L110.35 525.61L107.31 528.65L104.81 526.86L103.86 527.26L103.35 530.29L99.05 530.29L98.54 527.26L97.59 526.86L95.09 528.65L92.05 525.61L93.84 523.11L93.44 522.16L90.41 521.65L90.41 517.35L93.44 516.84L93.84 515.89L92.05 513.39L95.09 510.35L97.59 512.14L98.54 511.74L99.05 508.71L103.35 508.71L103.86 511.74L104.81 512.14L107.31 510.35L110.35 513.39L108.56 515.89Z" fill="#fff" stroke="#5a5f82" stroke-width="1.4"/><circle cx="101.2" cy="519.5" r="4.6" fill="none" stroke="#5a5f82" stroke-width="1.3"/><circle cx="101.2" cy="519.5" r="2.4" fill="#1a8ad4"/><path d="M62 638.0H72M63.5 641.0H71M62 644.0H70M63.5 647.0H69M62 650.0H69" stroke="#5a5f82" stroke-width="1.2"/><path d="M70 650.0L77 636.5L80 646.0H86" fill="none" stroke="#1a8ad4" stroke-width="1.5"/><rect x="93.5" y="659.0" width="19" height="23" fill="#fff" stroke="#5a5f82" stroke-width="1.3"/><path d="M96.5 662.5H110.5" stroke="#1a8ad4" stroke-width="1.3"/><path d="M96.5 665.2H110.5" stroke="#1a8ad4" stroke-width="1.3"/><path d="M96.5 667.9H110.5" stroke="#1a8ad4" stroke-width="1.3"/><path d="M96.5 670.6H110.5" stroke="#1a8ad4" stroke-width="1.3"/><path d="M96.5 673.3H110.5" stroke="#1a8ad4" stroke-width="1.3"/><path d="M96.5 676.0H110.5" stroke="#1a8ad4" stroke-width="1.3"/><path d="M96.5 678.7H102.5" stroke="#1a8ad4" stroke-width="1.3"/><rect x="62" y="683.5" width="23" height="23" fill="#fff" stroke="#5a5f82" stroke-width="1.3"/><path d="M65 688.0C70 688.0 74 702.0 80 702.0M65 702.0C70 702.0 74 688.0 80 688.0" fill="none" stroke="#1a8ad4" stroke-width="1.3"/><path d="M79 685.0L83 688.0L79 691.0ZM79 699.0L83 702.0L79 705.0Z" fill="#1a8ad4"/><path d="M65.5 713.5V726.5Q74 731.5 82.5 726.5V713.5" fill="#fff" stroke="#5a5f82" stroke-width="1.4"/><path d="M65.5 718.5Q74 722.5 82.5 718.5M65.5 722.5Q74 726.5 82.5 722.5" fill="none" stroke="#5a5f82" stroke-width="1.4"/><ellipse cx="74" cy="713.5" rx="8.5" ry="4" fill="#1a8ad4"/><rect x="63" y="735.5" width="21.5" height="19" fill="#c8e4c8" stroke="#5a5f82" stroke-width="1.4"/><path d="M66 745.0H82M70 737.0V753.0M77 737.0V753.0" stroke="#909890" stroke-width="1"/><path d="M64.5 747.0C67 733.0 72 736.0 74 745.0C76 754.0 81 755.0 83 741.0" fill="none" stroke="#1a8ad4" stroke-width="1.5"/></svg>
<div class="t" style="left:121.00px;top:4.10px;font-size:15px;letter-spacing:0.794px;">Program Block</div>
<div class="t" style="left:149.80px;top:29.10px;font-size:15px;letter-spacing:1.100px;">MAIN</div>
<div class="t" style="left:149.80px;top:54.10px;font-size:15px;letter-spacing:-0.817px;">SBR_001</div>
<div class="t" style="left:149.80px;top:79.10px;font-size:15px;letter-spacing:-0.104px;">INT_001</div>
<div class="t" style="left:121.00px;top:104.10px;font-size:15px;letter-spacing:0.239px;">Function Block (FB)</div>
<div class="t" style="left:121.00px;top:129.10px;font-size:15px;letter-spacing:-0.060px;">Function (FC)</div>
<div class="t" style="left:92.00px;top:154.10px;font-size:15px;letter-spacing:0.670px;">Config</div>
<div class="t" style="left:121.00px;top:179.10px;font-size:15px;letter-spacing:0.529px;">Input Filtering</div>
<div class="t" style="left:121.00px;top:204.10px;font-size:15px;letter-spacing:-0.444px;">EXP-A</div>
<div class="t" style="left:121.00px;top:229.10px;font-size:15px;letter-spacing:-0.575px;">EXP-B</div>
<div class="t" style="left:121.00px;top:254.10px;font-size:15px;letter-spacing:0.879px;">Module Config</div>
<div class="t" style="left:121.00px;top:279.10px;font-size:15px;letter-spacing:0.362px;">Electronic Cam</div>
<div class="t" style="left:121.00px;top:304.10px;font-size:15px;letter-spacing:0.821px;">Motion Control Axis</div>
<div class="t" style="left:121.00px;top:329.10px;font-size:15px;letter-spacing:0.506px;">Axis Group Settings</div>
<div class="t" style="left:121.00px;top:354.10px;font-size:15px;letter-spacing:0.039px;">EtherCAT</div>
<div class="t" style="left:121.00px;top:379.10px;font-size:15px;letter-spacing:0.750px;">COM0</div>
<div class="t" style="left:121.00px;top:404.10px;font-size:15px;letter-spacing:0.371px;">Ethernet</div>
<div class="t" style="left:121.00px;top:429.10px;font-size:15px;letter-spacing:0.585px;">EtherNet/IP</div>
<div class="t" style="left:91.70px;top:454.10px;font-size:15px;letter-spacing:0.971px;">Variable Monitor Table</div>
<div class="t" style="left:121.00px;top:479.10px;font-size:15px;letter-spacing:1.167px;">MAIN</div>
<div class="t" style="left:91.70px;top:504.10px;font-size:15px;letter-spacing:0.534px;">Cross Reference Table</div>
<div class="t" style="left:91.70px;top:529.10px;font-size:15px;letter-spacing:0.808px;">Element Using Infomation Table</div>
<div class="t" style="left:91.70px;top:554.10px;font-size:15px;letter-spacing:0.425px;">Trace</div>
</div>
<div style="position:absolute;left:319px;top:147px;width:1px;height:616px;background:#a0a0a0"></div>
<div style="position:absolute;left:319px;top:147px;width:1047px;height:1px;background:#a0a0a0"></div>
<div style="position:absolute;left:1365px;top:147px;width:1px;height:617px;background:#c8c8c8"></div>
<div style="position:absolute;left:323px;top:151px;width:1039px;height:612px;background:#707070"></div>
<div style="position:absolute;left:325px;top:153px;width:1037px;height:610px;background:#8a8a8a"></div>
<div style="position:absolute;left:327px;top:155px;width:1035px;height:608px;background:#fff"></div>
<div style="position:absolute;left:327px;top:155px;width:1031px;height:602px;background:#d4d0c8"></div>
<div style="position:absolute;left:1358px;top:155px;width:3px;height:608px;background:#e6e6e6"></div>
<div style="position:absolute;left:327px;top:757px;width:1035px;height:6px;background:#f8f8f8"></div>
<div style="position:absolute;left:323px;top:763px;width:1043px;height:1px;background:#303030"></div>
<div style="position:absolute;left:328px;top:155px;width:1030px;height:21px;background:#fff"></div>
<div style="position:absolute;left:329px;top:156px;width:64px;height:20px;background:#0080ff"></div>
<div style="position:absolute;left:394px;top:156px;width:963px;height:20px;background:#f0f0f0"></div>
<div style="position:absolute;left:328px;top:176px;width:1030px;height:362px;background:#fff"></div>
<div style="position:absolute;left:329px;top:178px;width:64px;height:19px;background:#0080ff"></div>
<div style="position:absolute;left:329px;top:177px;width:64px;height:1px;background:#f4f4f4"></div>
<div style="position:absolute;left:329px;top:199px;width:64px;height:20px;background:#0080ff"></div>
<div style="position:absolute;left:329px;top:198px;width:64px;height:1px;background:#f4f4f4"></div>
<div style="position:absolute;left:329px;top:221px;width:64px;height:19px;background:#0080ff"></div>
<div style="position:absolute;left:329px;top:220px;width:64px;height:1px;background:#f4f4f4"></div>
<div style="position:absolute;left:329px;top:242px;width:64px;height:19px;background:#0080ff"></div>
<div style="position:absolute;left:329px;top:241px;width:64px;height:1px;background:#f4f4f4"></div>
<div style="position:absolute;left:329px;top:263px;width:64px;height:19px;background:#0080ff"></div>
<div style="position:absolute;left:329px;top:262px;width:64px;height:1px;background:#f4f4f4"></div>
<div style="position:absolute;left:329px;top:284px;width:64px;height:20px;background:#0080ff"></div>
<div style="position:absolute;left:329px;top:283px;width:64px;height:1px;background:#f4f4f4"></div>
<div style="position:absolute;left:329px;top:306px;width:64px;height:19px;background:#0080ff"></div>
<div style="position:absolute;left:329px;top:305px;width:64px;height:1px;background:#f4f4f4"></div>
<div style="position:absolute;left:329px;top:327px;width:64px;height:19px;background:#0080ff"></div>
<div style="position:absolute;left:329px;top:326px;width:64px;height:1px;background:#f4f4f4"></div>
<div style="position:absolute;left:329px;top:348px;width:64px;height:19px;background:#0080ff"></div>
<div style="position:absolute;left:329px;top:347px;width:64px;height:1px;background:#f4f4f4"></div>
<div style="position:absolute;left:329px;top:369px;width:64px;height:20px;background:#0080ff"></div>
<div style="position:absolute;left:329px;top:368px;width:64px;height:1px;background:#f4f4f4"></div>
<div style="position:absolute;left:329px;top:391px;width:64px;height:19px;background:#0080ff"></div>
<div style="position:absolute;left:329px;top:390px;width:64px;height:1px;background:#f4f4f4"></div>
<div style="position:absolute;left:329px;top:412px;width:64px;height:19px;background:#0080ff"></div>
<div style="position:absolute;left:329px;top:411px;width:64px;height:1px;background:#f4f4f4"></div>
<div style="position:absolute;left:329px;top:433px;width:64px;height:19px;background:#0080ff"></div>
<div style="position:absolute;left:329px;top:432px;width:64px;height:1px;background:#f4f4f4"></div>
<div style="position:absolute;left:329px;top:454px;width:64px;height:20px;background:#0080ff"></div>
<div style="position:absolute;left:329px;top:453px;width:64px;height:1px;background:#f4f4f4"></div>
<div style="position:absolute;left:329px;top:476px;width:64px;height:19px;background:#0080ff"></div>
<div style="position:absolute;left:329px;top:475px;width:64px;height:1px;background:#f4f4f4"></div>
<div style="position:absolute;left:329px;top:497px;width:64px;height:19px;background:#0080ff"></div>
<div style="position:absolute;left:329px;top:496px;width:64px;height:1px;background:#f4f4f4"></div>
<div style="position:absolute;left:329px;top:518px;width:64px;height:19px;background:#0080ff"></div>
<div style="position:absolute;left:329px;top:517px;width:64px;height:1px;background:#f4f4f4"></div>
<div style="position:absolute;left:328px;top:176px;width:1030px;height:1px;background:#a0a0a0"></div>
<div style="position:absolute;left:328px;top:197px;width:1030px;height:1px;background:#a0a0a0"></div>
<div style="position:absolute;left:328px;top:219px;width:1030px;height:1px;background:#a0a0a0"></div>
<div style="position:absolute;left:328px;top:240px;width:1030px;height:1px;background:#a0a0a0"></div>
<div style="position:absolute;left:328px;top:261px;width:1030px;height:1px;background:#a0a0a0"></div>
<div style="position:absolute;left:328px;top:282px;width:1030px;height:1px;background:#a0a0a0"></div>
<div style="position:absolute;left:328px;top:304px;width:1030px;height:1px;background:#a0a0a0"></div>
<div style="position:absolute;left:328px;top:325px;width:1030px;height:1px;background:#a0a0a0"></div>
<div style="position:absolute;left:328px;top:346px;width:1030px;height:1px;background:#a0a0a0"></div>
<div style="position:absolute;left:328px;top:367px;width:1030px;height:1px;background:#a0a0a0"></div>
<div style="position:absolute;left:328px;top:389px;width:1030px;height:1px;background:#a0a0a0"></div>
<div style="position:absolute;left:328px;top:410px;width:1030px;height:1px;background:#a0a0a0"></div>
<div style="position:absolute;left:328px;top:431px;width:1030px;height:1px;background:#a0a0a0"></div>
<div style="position:absolute;left:328px;top:452px;width:1030px;height:1px;background:#a0a0a0"></div>
<div style="position:absolute;left:328px;top:474px;width:1030px;height:1px;background:#a0a0a0"></div>
<div style="position:absolute;left:328px;top:495px;width:1030px;height:1px;background:#a0a0a0"></div>
<div style="position:absolute;left:328px;top:516px;width:1030px;height:1px;background:#a0a0a0"></div>
<div style="position:absolute;left:328px;top:537px;width:1030px;height:1px;background:#a0a0a0"></div>
<div style="position:absolute;left:393px;top:156px;width:1px;height:382px;background:#a0a0a0"></div>
<div style="position:absolute;left:552px;top:156px;width:1px;height:382px;background:#a0a0a0"></div>
<div style="position:absolute;left:677px;top:156px;width:1px;height:382px;background:#a0a0a0"></div>
<div style="position:absolute;left:802px;top:156px;width:1px;height:382px;background:#a0a0a0"></div>
<div style="position:absolute;left:968px;top:156px;width:1px;height:382px;background:#a0a0a0"></div>
<div style="position:absolute;left:1357px;top:156px;width:1px;height:382px;background:#a0a0a0"></div>
<div style="position:absolute;left:418px;top:176px;width:1px;height:361px;background:#a0a0a0"></div>
<div class="t" style="left:397.70px;top:159.32px;font-size:15.5px;font-family:'Liberation Mono',monospace;transform:scaleX(0.8065);transform-origin:0 0;-webkit-text-stroke:0.15px currentColor;">Element Name</div>
<div class="t" style="left:556.20px;top:159.32px;font-size:15.5px;font-family:'Liberation Mono',monospace;transform:scaleX(0.8065);transform-origin:0 0;-webkit-text-stroke:0.15px currentColor;">Data Type</div>
<div class="t" style="left:681.00px;top:159.32px;font-size:15.5px;font-family:'Liberation Mono',monospace;transform:scaleX(0.8065);transform-origin:0 0;-webkit-text-stroke:0.15px currentColor;">Display Format</div>
<div class="t" style="left:805.80px;top:159.32px;font-size:15.5px;font-family:'Liberation Mono',monospace;transform:scaleX(0.8065);transform-origin:0 0;-webkit-text-stroke:0.15px currentColor;">Current Value</div>
<div class="t" style="left:972.00px;top:159.32px;font-size:15.5px;font-family:'Liberation Mono',monospace;transform:scaleX(0.8065);transform-origin:0 0;-webkit-text-stroke:0.15px currentColor;">Comment</div>
<div style="position:absolute;left:394px;top:177px;width:24px;height:20px;border:1px dotted #000;box-sizing:border-box;background:#fff"></div>
<div class="t" style="left:339.50px;top:182.57px;font-size:13.5px;">1</div>
<div class="t" style="left:439.10px;top:182.72px;font-size:15.5px;font-family:'Liberation Mono',monospace;transform:scaleX(0.8065);transform-origin:0 0;-webkit-text-stroke:0.15px currentColor;">D0</div>
<div class="t" style="left:556.20px;top:182.72px;font-size:15.5px;font-family:'Liberation Mono',monospace;transform:scaleX(0.8065);transform-origin:0 0;-webkit-text-stroke:0.15px currentColor;">INT</div>
<div class="t" style="left:681.00px;top:182.72px;font-size:15.5px;font-family:'Liberation Mono',monospace;transform:scaleX(0.8065);transform-origin:0 0;-webkit-text-stroke:0.15px currentColor;">Dec</div>
<div class="t" style="left:806.00px;top:182.72px;font-size:15.5px;font-family:'Liberation Mono',monospace;transform:scaleX(0.8065);transform-origin:0 0;-webkit-text-stroke:0.15px currentColor;">0</div>
<div class="t" style="left:339.50px;top:203.57px;font-size:13.5px;">2</div>
<div class="t" style="left:439.10px;top:203.72px;font-size:15.5px;font-family:'Liberation Mono',monospace;transform:scaleX(0.8065);transform-origin:0 0;-webkit-text-stroke:0.15px currentColor;">D7999</div>
<div class="t" style="left:556.20px;top:203.72px;font-size:15.5px;font-family:'Liberation Mono',monospace;transform:scaleX(0.8065);transform-origin:0 0;-webkit-text-stroke:0.15px currentColor;">INT</div>
<div class="t" style="left:681.00px;top:203.72px;font-size:15.5px;font-family:'Liberation Mono',monospace;transform:scaleX(0.8065);transform-origin:0 0;-webkit-text-stroke:0.15px currentColor;">Dec</div>
<div class="t" style="left:806.00px;top:203.72px;font-size:15.5px;font-family:'Liberation Mono',monospace;transform:scaleX(0.8065);transform-origin:0 0;-webkit-text-stroke:0.15px currentColor;">0</div>
<div class="t" style="left:339.50px;top:225.57px;font-size:13.5px;">3</div>
<div class="t" style="left:439.10px;top:225.72px;font-size:15.5px;font-family:'Liberation Mono',monospace;transform:scaleX(0.8065);transform-origin:0 0;-webkit-text-stroke:0.15px currentColor;">R0</div>
<div class="t" style="left:556.20px;top:225.72px;font-size:15.5px;font-family:'Liberation Mono',monospace;transform:scaleX(0.8065);transform-origin:0 0;-webkit-text-stroke:0.15px currentColor;">INT</div>
<div class="t" style="left:681.00px;top:225.72px;font-size:15.5px;font-family:'Liberation Mono',monospace;transform:scaleX(0.8065);transform-origin:0 0;-webkit-text-stroke:0.15px currentColor;">Dec</div>
<div class="t" style="left:806.00px;top:225.72px;font-size:15.5px;font-family:'Liberation Mono',monospace;transform:scaleX(0.8065);transform-origin:0 0;-webkit-text-stroke:0.15px currentColor;">0</div>
<div class="t" style="left:339.50px;top:246.57px;font-size:13.5px;">4</div>
<div class="t" style="left:439.10px;top:246.72px;font-size:15.5px;font-family:'Liberation Mono',monospace;transform:scaleX(0.8065);transform-origin:0 0;-webkit-text-stroke:0.15px currentColor;">R32767</div>
<div class="t" style="left:556.20px;top:246.72px;font-size:15.5px;font-family:'Liberation Mono',monospace;transform:scaleX(0.8065);transform-origin:0 0;-webkit-text-stroke:0.15px currentColor;">INT</div>
<div class="t" style="left:681.00px;top:246.72px;font-size:15.5px;font-family:'Liberation Mono',monospace;transform:scaleX(0.8065);transform-origin:0 0;-webkit-text-stroke:0.15px currentColor;">Dec</div>
<div class="t" style="left:806.00px;top:246.72px;font-size:15.5px;font-family:'Liberation Mono',monospace;transform:scaleX(0.8065);transform-origin:0 0;-webkit-text-stroke:0.15px currentColor;">0</div>
<div class="t" style="left:339.50px;top:267.57px;font-size:13.5px;">5</div>
<div class="t" style="left:439.10px;top:267.72px;font-size:15.5px;font-family:'Liberation Mono',monospace;transform:scaleX(0.8065);transform-origin:0 0;-webkit-text-stroke:0.15px currentColor;">M0</div>
<div class="t" style="left:556.20px;top:267.72px;font-size:15.5px;font-family:'Liberation Mono',monospace;transform:scaleX(0.8065);transform-origin:0 0;-webkit-text-stroke:0.15px currentColor;">BOOL</div>
<div class="t" style="left:681.00px;top:267.72px;font-size:15.5px;font-family:'Liberation Mono',monospace;transform:scaleX(0.8065);transform-origin:0 0;-webkit-text-stroke:0.15px currentColor;">Bin</div>
<div class="t" style="left:806.00px;top:267.72px;font-size:15.5px;font-family:'Liberation Mono',monospace;transform:scaleX(0.8065);transform-origin:0 0;-webkit-text-stroke:0.15px currentColor;">OFF</div>
<div class="t" style="left:339.50px;top:288.57px;font-size:13.5px;">6</div>
<div class="t" style="left:439.10px;top:288.72px;font-size:15.5px;font-family:'Liberation Mono',monospace;transform:scaleX(0.8065);transform-origin:0 0;-webkit-text-stroke:0.15px currentColor;">M7999</div>
<div class="t" style="left:556.20px;top:288.72px;font-size:15.5px;font-family:'Liberation Mono',monospace;transform:scaleX(0.8065);transform-origin:0 0;-webkit-text-stroke:0.15px currentColor;">BOOL</div>
<div class="t" style="left:681.00px;top:288.72px;font-size:15.5px;font-family:'Liberation Mono',monospace;transform:scaleX(0.8065);transform-origin:0 0;-webkit-text-stroke:0.15px currentColor;">Bin</div>
<div class="t" style="left:806.00px;top:288.72px;font-size:15.5px;font-family:'Liberation Mono',monospace;transform:scaleX(0.8065);transform-origin:0 0;-webkit-text-stroke:0.15px currentColor;">OFF</div>
<div class="t" style="left:339.50px;top:310.57px;font-size:13.5px;">7</div>
<div class="t" style="left:439.10px;top:310.72px;font-size:15.5px;font-family:'Liberation Mono',monospace;transform:scaleX(0.8065);transform-origin:0 0;-webkit-text-stroke:0.15px currentColor;">B0</div>
<div class="t" style="left:556.20px;top:310.72px;font-size:15.5px;font-family:'Liberation Mono',monospace;transform:scaleX(0.8065);transform-origin:0 0;-webkit-text-stroke:0.15px currentColor;">BOOL</div>
<div class="t" style="left:681.00px;top:310.72px;font-size:15.5px;font-family:'Liberation Mono',monospace;transform:scaleX(0.8065);transform-origin:0 0;-webkit-text-stroke:0.15px currentColor;">Bin</div>
<div class="t" style="left:806.00px;top:310.72px;font-size:15.5px;font-family:'Liberation Mono',monospace;transform:scaleX(0.8065);transform-origin:0 0;-webkit-text-stroke:0.15px currentColor;">OFF</div>
<div class="t" style="left:339.50px;top:331.57px;font-size:13.5px;">8</div>
<div class="t" style="left:439.10px;top:331.72px;font-size:15.5px;font-family:'Liberation Mono',monospace;transform:scaleX(0.8065);transform-origin:0 0;-webkit-text-stroke:0.15px currentColor;">B32767</div>
<div class="t" style="left:556.20px;top:331.72px;font-size:15.5px;font-family:'Liberation Mono',monospace;transform:scaleX(0.8065);transform-origin:0 0;-webkit-text-stroke:0.15px currentColor;">BOOL</div>
<div class="t" style="left:681.00px;top:331.72px;font-size:15.5px;font-family:'Liberation Mono',monospace;transform:scaleX(0.8065);transform-origin:0 0;-webkit-text-stroke:0.15px currentColor;">Bin</div>
<div class="t" style="left:806.00px;top:331.72px;font-size:15.5px;font-family:'Liberation Mono',monospace;transform:scaleX(0.8065);transform-origin:0 0;-webkit-text-stroke:0.15px currentColor;">OFF</div>
<div class="t" style="left:339.50px;top:352.57px;font-size:13.5px;">9</div>
<div class="t" style="left:439.10px;top:352.72px;font-size:15.5px;font-family:'Liberation Mono',monospace;transform:scaleX(0.8065);transform-origin:0 0;-webkit-text-stroke:0.15px currentColor;">S0</div>
<div class="t" style="left:556.20px;top:352.72px;font-size:15.5px;font-family:'Liberation Mono',monospace;transform:scaleX(0.8065);transform-origin:0 0;-webkit-text-stroke:0.15px currentColor;">BOOL</div>
<div class="t" style="left:681.00px;top:352.72px;font-size:15.5px;font-family:'Liberation Mono',monospace;transform:scaleX(0.8065);transform-origin:0 0;-webkit-text-stroke:0.15px currentColor;">Bin</div>
<div class="t" style="left:806.00px;top:352.72px;font-size:15.5px;font-family:'Liberation Mono',monospace;transform:scaleX(0.8065);transform-origin:0 0;-webkit-text-stroke:0.15px currentColor;">OFF</div>
<div class="t" style="left:339.50px;top:373.57px;font-size:13.5px;">10</div>
<div class="t" style="left:439.10px;top:373.72px;font-size:15.5px;font-family:'Liberation Mono',monospace;transform:scaleX(0.8065);transform-origin:0 0;-webkit-text-stroke:0.15px currentColor;">S4095</div>
<div class="t" style="left:556.20px;top:373.72px;font-size:15.5px;font-family:'Liberation Mono',monospace;transform:scaleX(0.8065);transform-origin:0 0;-webkit-text-stroke:0.15px currentColor;">BOOL</div>
<div class="t" style="left:681.00px;top:373.72px;font-size:15.5px;font-family:'Liberation Mono',monospace;transform:scaleX(0.8065);transform-origin:0 0;-webkit-text-stroke:0.15px currentColor;">Bin</div>
<div class="t" style="left:806.00px;top:373.72px;font-size:15.5px;font-family:'Liberation Mono',monospace;transform:scaleX(0.8065);transform-origin:0 0;-webkit-text-stroke:0.15px currentColor;">OFF</div>
<div class="t" style="left:339.50px;top:395.57px;font-size:13.5px;">11</div>
<div class="t" style="left:439.10px;top:395.72px;font-size:15.5px;font-family:'Liberation Mono',monospace;transform:scaleX(0.8065);transform-origin:0 0;-webkit-text-stroke:0.15px currentColor;">X0</div>
<div class="t" style="left:556.20px;top:395.72px;font-size:15.5px;font-family:'Liberation Mono',monospace;transform:scaleX(0.8065);transform-origin:0 0;-webkit-text-stroke:0.15px currentColor;">BOOL</div>
<div class="t" style="left:681.00px;top:395.72px;font-size:15.5px;font-family:'Liberation Mono',monospace;transform:scaleX(0.8065);transform-origin:0 0;-webkit-text-stroke:0.15px currentColor;">Bin</div>
<div class="t" style="left:806.00px;top:395.72px;font-size:15.5px;font-family:'Liberation Mono',monospace;transform:scaleX(0.8065);transform-origin:0 0;-webkit-text-stroke:0.15px currentColor;">OFF</div>
<div class="t" style="left:339.50px;top:416.57px;font-size:13.5px;">12</div>
<div class="t" style="left:439.10px;top:416.72px;font-size:15.5px;font-family:'Liberation Mono',monospace;transform:scaleX(0.8065);transform-origin:0 0;-webkit-text-stroke:0.15px currentColor;">X1777</div>
<div class="t" style="left:556.20px;top:416.72px;font-size:15.5px;font-family:'Liberation Mono',monospace;transform:scaleX(0.8065);transform-origin:0 0;-webkit-text-stroke:0.15px currentColor;">BOOL</div>
<div class="t" style="left:681.00px;top:416.72px;font-size:15.5px;font-family:'Liberation Mono',monospace;transform:scaleX(0.8065);transform-origin:0 0;-webkit-text-stroke:0.15px currentColor;">Bin</div>
<div class="t" style="left:806.00px;top:416.72px;font-size:15.5px;font-family:'Liberation Mono',monospace;transform:scaleX(0.8065);transform-origin:0 0;-webkit-text-stroke:0.15px currentColor;">OFF</div>
<div class="t" style="left:339.50px;top:437.57px;font-size:13.5px;">13</div>
<div class="t" style="left:439.10px;top:437.72px;font-size:15.5px;font-family:'Liberation Mono',monospace;transform:scaleX(0.8065);transform-origin:0 0;-webkit-text-stroke:0.15px currentColor;">Y0</div>
<div class="t" style="left:556.20px;top:437.72px;font-size:15.5px;font-family:'Liberation Mono',monospace;transform:scaleX(0.8065);transform-origin:0 0;-webkit-text-stroke:0.15px currentColor;">BOOL</div>
<div class="t" style="left:681.00px;top:437.72px;font-size:15.5px;font-family:'Liberation Mono',monospace;transform:scaleX(0.8065);transform-origin:0 0;-webkit-text-stroke:0.15px currentColor;">Bin</div>
<div class="t" style="left:806.00px;top:437.72px;font-size:15.5px;font-family:'Liberation Mono',monospace;transform:scaleX(0.8065);transform-origin:0 0;-webkit-text-stroke:0.15px currentColor;">OFF</div>
<div class="t" style="left:339.50px;top:458.57px;font-size:13.5px;">14</div>
<div class="t" style="left:439.10px;top:458.72px;font-size:15.5px;font-family:'Liberation Mono',monospace;transform:scaleX(0.8065);transform-origin:0 0;-webkit-text-stroke:0.15px currentColor;">Y1777</div>
<div class="t" style="left:556.20px;top:458.72px;font-size:15.5px;font-family:'Liberation Mono',monospace;transform:scaleX(0.8065);transform-origin:0 0;-webkit-text-stroke:0.15px currentColor;">BOOL</div>
<div class="t" style="left:681.00px;top:458.72px;font-size:15.5px;font-family:'Liberation Mono',monospace;transform:scaleX(0.8065);transform-origin:0 0;-webkit-text-stroke:0.15px currentColor;">Bin</div>
<div class="t" style="left:806.00px;top:458.72px;font-size:15.5px;font-family:'Liberation Mono',monospace;transform:scaleX(0.8065);transform-origin:0 0;-webkit-text-stroke:0.15px currentColor;">OFF</div>
<div class="t" style="left:339.50px;top:480.57px;font-size:13.5px;">15</div>
<div class="t" style="left:439.10px;top:480.72px;font-size:15.5px;font-family:'Liberation Mono',monospace;transform:scaleX(0.8065);transform-origin:0 0;-webkit-text-stroke:0.15px currentColor;">D2</div>
<div class="t" style="left:556.20px;top:480.72px;font-size:15.5px;font-family:'Liberation Mono',monospace;transform:scaleX(0.8065);transform-origin:0 0;-webkit-text-stroke:0.15px currentColor;">INT</div>
<div class="t" style="left:681.00px;top:480.72px;font-size:15.5px;font-family:'Liberation Mono',monospace;transform:scaleX(0.8065);transform-origin:0 0;-webkit-text-stroke:0.15px currentColor;">Dec</div>
<div class="t" style="left:806.00px;top:480.72px;font-size:15.5px;font-family:'Liberation Mono',monospace;transform:scaleX(0.8065);transform-origin:0 0;-webkit-text-stroke:0.15px currentColor;">0</div>
<div class="t" style="left:339.50px;top:501.57px;font-size:13.5px;">16</div>
<div class="t" style="left:439.10px;top:501.72px;font-size:15.5px;font-family:'Liberation Mono',monospace;transform:scaleX(0.8065);transform-origin:0 0;-webkit-text-stroke:0.15px currentColor;">D4</div>
<div class="t" style="left:556.20px;top:501.72px;font-size:15.5px;font-family:'Liberation Mono',monospace;transform:scaleX(0.8065);transform-origin:0 0;-webkit-text-stroke:0.15px currentColor;">INT</div>
<div class="t" style="left:681.00px;top:501.72px;font-size:15.5px;font-family:'Liberation Mono',monospace;transform:scaleX(0.8065);transform-origin:0 0;-webkit-text-stroke:0.15px currentColor;">Dec</div>
<div class="t" style="left:806.00px;top:501.72px;font-size:15.5px;font-family:'Liberation Mono',monospace;transform:scaleX(0.8065);transform-origin:0 0;-webkit-text-stroke:0.15px currentColor;">0</div>
<div class="t" style="left:339.50px;top:522.57px;font-size:13.5px;">17</div>
<div class="t" style="left:439.10px;top:522.72px;font-size:15.5px;font-family:'Liberation Mono',monospace;transform:scaleX(0.8065);transform-origin:0 0;-webkit-text-stroke:0.15px currentColor;">D6</div>
<div class="t" style="left:556.20px;top:522.72px;font-size:15.5px;font-family:'Liberation Mono',monospace;transform:scaleX(0.8065);transform-origin:0 0;-webkit-text-stroke:0.15px currentColor;">INT</div>
<div class="t" style="left:681.00px;top:522.72px;font-size:15.5px;font-family:'Liberation Mono',monospace;transform:scaleX(0.8065);transform-origin:0 0;-webkit-text-stroke:0.15px currentColor;">Dec</div>
<div class="t" style="left:806.00px;top:522.72px;font-size:15.5px;font-family:'Liberation Mono',monospace;transform:scaleX(0.8065);transform-origin:0 0;-webkit-text-stroke:0.15px currentColor;">0</div>
<svg style="left:0;top:0" width="1683" height="1019" viewBox="0 0 1683 1019"><rect x="398.8" y="213.3" width="1.6" height="1.6" fill="#000"/><rect x="406.6" y="213.3" width="1.6" height="1.6" fill="#000"/><rect x="414.4" y="213.3" width="1.6" height="1.6" fill="#000"/><rect x="398.8" y="235.3" width="1.6" height="1.6" fill="#000"/><rect x="406.6" y="235.3" width="1.6" height="1.6" fill="#000"/><rect x="414.4" y="235.3" width="1.6" height="1.6" fill="#000"/><rect x="398.8" y="256.3" width="1.6" height="1.6" fill="#000"/><rect x="406.6" y="256.3" width="1.6" height="1.6" fill="#000"/><rect x="414.4" y="256.3" width="1.6" height="1.6" fill="#000"/><rect x="398.8" y="277.3" width="1.6" height="1.6" fill="#000"/><rect x="406.6" y="277.3" width="1.6" height="1.6" fill="#000"/><rect x="414.4" y="277.3" width="1.6" height="1.6" fill="#000"/><rect x="398.8" y="298.3" width="1.6" height="1.6" fill="#000"/><rect x="406.6" y="298.3" width="1.6" height="1.6" fill="#000"/><rect x="414.4" y="298.3" width="1.6" height="1.6" fill="#000"/><rect x="398.8" y="320.3" width="1.6" height="1.6" fill="#000"/><rect x="406.6" y="320.3" width="1.6" height="1.6" fill="#000"/><rect x="414.4" y="320.3" width="1.6" height="1.6" fill="#000"/><rect x="398.8" y="341.3" width="1.6" height="1.6" fill="#000"/><rect x="406.6" y="341.3" width="1.6" height="1.6" fill="#000"/><rect x="414.4" y="341.3" width="1.6" height="1.6" fill="#000"/><rect x="398.8" y="362.3" width="1.6" height="1.6" fill="#000"/><rect x="406.6" y="362.3" width="1.6" height="1.6" fill="#000"/><rect x="414.4" y="362.3" width="1.6" height="1.6" fill="#000"/><rect x="398.8" y="383.3" width="1.6" height="1.6" fill="#000"/><rect x="406.6" y="383.3" width="1.6" height="1.6" fill="#000"/><rect x="414.4" y="383.3" width="1.6" height="1.6" fill="#000"/><rect x="398.8" y="405.3" width="1.6" height="1.6" fill="#000"/><rect x="406.6" y="405.3" width="1.6" height="1.6" fill="#000"/><rect x="414.4" y="405.3" width="1.6" height="1.6" fill="#000"/><rect x="398.8" y="426.3" width="1.6" height="1.6" fill="#000"/><rect x="406.6" y="426.3" width="1.6" height="1.6" fill="#000"/><rect x="414.4" y="426.3" width="1.6" height="1.6" fill="#000"/><rect x="398.8" y="447.3" width="1.6" height="1.6" fill="#000"/><rect x="406.6" y="447.3" width="1.6" height="1.6" fill="#000"/><rect x="414.4" y="447.3" width="1.6" height="1.6" fill="#000"/><rect x="398.8" y="468.3" width="1.6" height="1.6" fill="#000"/><rect x="406.6" y="468.3" width="1.6" height="1.6" fill="#000"/><rect x="414.4" y="468.3" width="1.6" height="1.6" fill="#000"/><rect x="398.8" y="490.3" width="1.6" height="1.6" fill="#000"/><rect x="406.6" y="490.3" width="1.6" height="1.6" fill="#000"/><rect x="414.4" y="490.3" width="1.6" height="1.6" fill="#000"/><rect x="398.8" y="511.3" width="1.6" height="1.6" fill="#000"/><rect x="406.6" y="511.3" width="1.6" height="1.6" fill="#000"/><rect x="414.4" y="511.3" width="1.6" height="1.6" fill="#000"/><rect x="398.8" y="532.3" width="1.6" height="1.6" fill="#000"/><rect x="406.6" y="532.3" width="1.6" height="1.6" fill="#000"/><rect x="414.4" y="532.3" width="1.6" height="1.6" fill="#000"/></svg>
<div style="position:absolute;left:328px;top:538px;width:1030px;height:1px;background:#b8b4b0"></div>
<svg style="left:0;top:0" width="1683" height="1019" viewBox="0 0 1683 1019"><rect x="320.5" y="772.5" width="18" height="18" fill="#f2f2f2" stroke="none"/><path d="M338.5 772.5V790.5H320.5" fill="none" stroke="#909090"/><path d="M332 776.5L326 781.5L332 786.5Z" fill="none" stroke="#000" stroke-width="1.1"/><path d="M344 763.5L374 793.5H442Q446 793.5 446 789.5V786" fill="#f0f0f0" stroke="#000" stroke-width="1.2"/><path d="M425 763.5L455.5 793.5H524.5Q527 793.5 527 791V763.5" fill="#fff" stroke="#000" stroke-width="1.2"/><rect x="1316.5" y="772.5" width="18" height="18" fill="#f2f2f2" stroke="none"/><path d="M1334.5 772.5V790.5H1316.5" fill="none" stroke="#909090"/><path d="M1323.5 776.5L1328.5 781.5L1323.5 786.5Z" fill="none" stroke="#000" stroke-width="1"/><rect x="1339.5" y="772.5" width="18" height="18" fill="#f2f2f2" stroke="none"/><path d="M1357.5 772.5V790.5H1339.5" fill="none" stroke="#909090"/><path d="M1344.5 777.5L1352.5 785.5M1352.5 777.5L1344.5 785.5" stroke="#000" stroke-width="1.8"/></svg>
<svg style="left:0;top:0" width="1683" height="1019" viewBox="0 0 1683 1019"><path d="M376.5 770.5H392.5V780M376.5 770.5V788.5H384" fill="none" stroke="#707070" stroke-width="1.1"/><path d="M379 773.5H390M379 776H390M379 778.5H385" stroke="#1a8ad4" stroke-width="1.2"/><text x="389.5" y="789.5" text-anchor="middle" font-family="Liberation Sans" font-weight="bold" font-size="9.5" fill="#1a8ad4">M</text><rect x="454.5" y="770.5" width="19" height="19" fill="#fff" stroke="#707070" stroke-width="1.1"/><path d="M457 773.5H471M457 776H471M457 778.5H471M457 781H471M457 783.5H471M457 786H464" stroke="#1a8ad4" stroke-width="1.2"/></svg>
<div style="position:absolute;left:344px;top:764px;width:110px;height:30px;overflow:hidden;clip-path:polygon(0 0,81px 0,110px 30px,0 30px)">
<div class="t" style="left:54.40px;top:7.56px;font-size:14.7px;transform:scaleX(1.1428571428571428);transform-origin:0 0;">MAIN</div>
</div>
<div class="t" style="left:480.40px;top:771.76px;font-size:14.7px;font-weight:bold;transform:scaleX(1.1395556265559061);transform-origin:0 0;">MAIN</div>
<div class="t" style="left:1376.70px;top:155.20px;font-size:15px;transform:scaleX(1.1707789066279632);transform-origin:0 0;">Toolbox</div>
<svg style="left:0;top:0" width="1683" height="1019" viewBox="0 0 1683 1019"><path d="M1648.5 159.5H1653.5M1649.5 160V165M1652.5 160V165M1647 165.5H1655M1651 165.5V169" fill="none" stroke="#000" stroke-width="1.6"/><path d="M1666 159.5L1676 168.5M1676 159.5L1666 168.5" stroke="#000" stroke-width="1.8"/></svg>
<div style="position:absolute;left:1372px;top:181px;width:252px;height:27px;border:2px solid #8a8a8a;border-top-color:#7a7a7a;border-left-color:#7a7a7a;box-sizing:border-box;background:#fff"></div>
<svg style="left:0;top:0" width="1683" height="1019" viewBox="0 0 1683 1019"><path d="M1608 193.0L1613 198.0L1618 193.0" fill="none" stroke="#404040" stroke-width="1.2"/></svg>
<div style="position:absolute;left:1628px;top:184px;width:51px;height:25px;background:#e1e1e1;border:1px solid #c8c8c8;box-sizing:border-box"></div>
<div class="t" style="left:1631.90px;top:190.05px;font-size:14px;letter-spacing:-0.676px;">Search</div>
<div style="position:absolute;left:1373px;top:217px;width:307px;height:484px;border:1px solid #a0a0a0;border-top:2px solid #a0a0a0;box-sizing:border-box;background:#fff"></div>
<div style="position:absolute;left:1658px;top:219px;width:19px;height:461px;background:#f0f0f0"></div>
<div style="position:absolute;left:1658px;top:241px;width:19px;height:327px;background:#cdcdcd"></div>
<div style="position:absolute;left:1374px;top:680px;width:305px;height:20px;background:#f0f0f0"></div>
<div style="position:absolute;left:1397px;top:681px;width:218px;height:17px;background:#cdcdcd"></div>
<svg style="left:0;top:0" width="1683" height="1019" viewBox="0 0 1683 1019"><path d="M1663.2 233.15L1667.5 228.85L1671.8 233.15" fill="none" stroke="#555" stroke-width="2"/><path d="M1663.2 664.85L1667.5 669.15L1671.8 664.85" fill="none" stroke="#555" stroke-width="2"/><path d="M1387.65 684.7L1383.35 689L1387.65 693.3" fill="none" stroke="#555" stroke-width="2"/><path d="M1643.35 684.7L1647.65 689L1643.35 693.3" fill="none" stroke="#555" stroke-width="2"/></svg>
<div style="position:absolute;left:1374px;top:219px;width:284px;height:461px;overflow:hidden">
<svg style="left:-1374px;top:-219px" width="1683" height="1019" viewBox="0 0 1683 1019"><path d="M1390.5 236V680" stroke="#a8a8a8" stroke-width="1.1" stroke-dasharray="1.25 1.25"/><path d="M1414.5 236V270" stroke="#a8a8a8" stroke-width="1.1" stroke-dasharray="1.25 1.25"/><path d="M1414.5 296V330" stroke="#a8a8a8" stroke-width="1.1" stroke-dasharray="1.25 1.25"/><path d="M1414.5 356V390" stroke="#a8a8a8" stroke-width="1.1" stroke-dasharray="1.25 1.25"/><path d="M1414.5 416V680" stroke="#a8a8a8" stroke-width="1.1" stroke-dasharray="1.25 1.25"/><path d="M1397 229.5H1403" stroke="#a8a8a8" stroke-width="1.1" stroke-dasharray="1.25 1.25"/><rect x="1385.5" y="224.5" width="10" height="10" rx="1.5" fill="#f4f4f4" stroke="#a8a8a8" stroke-width="1.3"/><path d="M1387.5 229.5H1393.5" stroke="#3c5a9a" stroke-width="1.3"/><path d="M1420 249.5H1427" stroke="#a8a8a8" stroke-width="1.1" stroke-dasharray="1.25 1.25"/><rect x="1409.5" y="244.5" width="10" height="10" rx="1.5" fill="#f4f4f4" stroke="#a8a8a8" stroke-width="1.3"/><path d="M1411.5 249.5H1417.5" stroke="#3c5a9a" stroke-width="1.3"/><path d="M1414.5 246.5V252.5" stroke="#3c5a9a" stroke-width="1.3"/><path d="M1415 269.5H1427" stroke="#a8a8a8" stroke-width="1.1" stroke-dasharray="1.25 1.25"/><path d="M1397 289.5H1403" stroke="#a8a8a8" stroke-width="1.1" stroke-dasharray="1.25 1.25"/><rect x="1385.5" y="284.5" width="10" height="10" rx="1.5" fill="#f4f4f4" stroke="#a8a8a8" stroke-width="1.3"/><path d="M1387.5 289.5H1393.5" stroke="#3c5a9a" stroke-width="1.3"/><path d="M1420 309.5H1427" stroke="#a8a8a8" stroke-width="1.1" stroke-dasharray="1.25 1.25"/><rect x="1409.5" y="304.5" width="10" height="10" rx="1.5" fill="#f4f4f4" stroke="#a8a8a8" stroke-width="1.3"/><path d="M1411.5 309.5H1417.5" stroke="#3c5a9a" stroke-width="1.3"/><path d="M1414.5 306.5V312.5" stroke="#3c5a9a" stroke-width="1.3"/><path d="M1420 329.5H1427" stroke="#a8a8a8" stroke-width="1.1" stroke-dasharray="1.25 1.25"/><rect x="1409.5" y="324.5" width="10" height="10" rx="1.5" fill="#f4f4f4" stroke="#a8a8a8" stroke-width="1.3"/><path d="M1411.5 329.5H1417.5" stroke="#3c5a9a" stroke-width="1.3"/><path d="M1414.5 326.5V332.5" stroke="#3c5a9a" stroke-width="1.3"/><path d="M1397 349.5H1403" stroke="#a8a8a8" stroke-width="1.1" stroke-dasharray="1.25 1.25"/><rect x="1385.5" y="344.5" width="10" height="10" rx="1.5" fill="#f4f4f4" stroke="#a8a8a8" stroke-width="1.3"/><path d="M1387.5 349.5H1393.5" stroke="#3c5a9a" stroke-width="1.3"/><path d="M1420 369.5H1427" stroke="#a8a8a8" stroke-width="1.1" stroke-dasharray="1.25 1.25"/><rect x="1409.5" y="364.5" width="10" height="10" rx="1.5" fill="#f4f4f4" stroke="#a8a8a8" stroke-width="1.3"/><path d="M1411.5 369.5H1417.5" stroke="#3c5a9a" stroke-width="1.3"/><path d="M1414.5 366.5V372.5" stroke="#3c5a9a" stroke-width="1.3"/><path d="M1420 389.5H1427" stroke="#a8a8a8" stroke-width="1.1" stroke-dasharray="1.25 1.25"/><rect x="1409.5" y="384.5" width="10" height="10" rx="1.5" fill="#f4f4f4" stroke="#a8a8a8" stroke-width="1.3"/><path d="M1411.5 389.5H1417.5" stroke="#3c5a9a" stroke-width="1.3"/><path d="M1414.5 386.5V392.5" stroke="#3c5a9a" stroke-width="1.3"/><path d="M1397 409.5H1403" stroke="#a8a8a8" stroke-width="1.1" stroke-dasharray="1.25 1.25"/><rect x="1385.5" y="404.5" width="10" height="10" rx="1.5" fill="#f4f4f4" stroke="#a8a8a8" stroke-width="1.3"/><path d="M1387.5 409.5H1393.5" stroke="#3c5a9a" stroke-width="1.3"/><path d="M1420 429.5H1427" stroke="#a8a8a8" stroke-width="1.1" stroke-dasharray="1.25 1.25"/><rect x="1409.5" y="424.5" width="10" height="10" rx="1.5" fill="#f4f4f4" stroke="#a8a8a8" stroke-width="1.3"/><path d="M1411.5 429.5H1417.5" stroke="#3c5a9a" stroke-width="1.3"/><path d="M1414.5 426.5V432.5" stroke="#3c5a9a" stroke-width="1.3"/><path d="M1420 449.5H1427" stroke="#a8a8a8" stroke-width="1.1" stroke-dasharray="1.25 1.25"/><rect x="1409.5" y="444.5" width="10" height="10" rx="1.5" fill="#f4f4f4" stroke="#a8a8a8" stroke-width="1.3"/><path d="M1411.5 449.5H1417.5" stroke="#3c5a9a" stroke-width="1.3"/><path d="M1414.5 446.5V452.5" stroke="#3c5a9a" stroke-width="1.3"/><path d="M1420 469.5H1427" stroke="#a8a8a8" stroke-width="1.1" stroke-dasharray="1.25 1.25"/><rect x="1409.5" y="464.5" width="10" height="10" rx="1.5" fill="#f4f4f4" stroke="#a8a8a8" stroke-width="1.3"/><path d="M1411.5 469.5H1417.5" stroke="#3c5a9a" stroke-width="1.3"/><path d="M1414.5 466.5V472.5" stroke="#3c5a9a" stroke-width="1.3"/><path d="M1420 489.5H1427" stroke="#a8a8a8" stroke-width="1.1" stroke-dasharray="1.25 1.25"/><rect x="1409.5" y="484.5" width="10" height="10" rx="1.5" fill="#f4f4f4" stroke="#a8a8a8" stroke-width="1.3"/><path d="M1411.5 489.5H1417.5" stroke="#3c5a9a" stroke-width="1.3"/><path d="M1414.5 486.5V492.5" stroke="#3c5a9a" stroke-width="1.3"/><path d="M1420 509.5H1427" stroke="#a8a8a8" stroke-width="1.1" stroke-dasharray="1.25 1.25"/><rect x="1409.5" y="504.5" width="10" height="10" rx="1.5" fill="#f4f4f4" stroke="#a8a8a8" stroke-width="1.3"/><path d="M1411.5 509.5H1417.5" stroke="#3c5a9a" stroke-width="1.3"/><path d="M1414.5 506.5V512.5" stroke="#3c5a9a" stroke-width="1.3"/><path d="M1420 529.5H1427" stroke="#a8a8a8" stroke-width="1.1" stroke-dasharray="1.25 1.25"/><rect x="1409.5" y="524.5" width="10" height="10" rx="1.5" fill="#f4f4f4" stroke="#a8a8a8" stroke-width="1.3"/><path d="M1411.5 529.5H1417.5" stroke="#3c5a9a" stroke-width="1.3"/><path d="M1414.5 526.5V532.5" stroke="#3c5a9a" stroke-width="1.3"/><path d="M1420 549.5H1427" stroke="#a8a8a8" stroke-width="1.1" stroke-dasharray="1.25 1.25"/><rect x="1409.5" y="544.5" width="10" height="10" rx="1.5" fill="#f4f4f4" stroke="#a8a8a8" stroke-width="1.3"/><path d="M1411.5 549.5H1417.5" stroke="#3c5a9a" stroke-width="1.3"/><path d="M1414.5 546.5V552.5" stroke="#3c5a9a" stroke-width="1.3"/><path d="M1420 569.5H1427" stroke="#a8a8a8" stroke-width="1.1" stroke-dasharray="1.25 1.25"/><rect x="1409.5" y="564.5" width="10" height="10" rx="1.5" fill="#f4f4f4" stroke="#a8a8a8" stroke-width="1.3"/><path d="M1411.5 569.5H1417.5" stroke="#3c5a9a" stroke-width="1.3"/><path d="M1414.5 566.5V572.5" stroke="#3c5a9a" stroke-width="1.3"/><path d="M1420 589.5H1427" stroke="#a8a8a8" stroke-width="1.1" stroke-dasharray="1.25 1.25"/><rect x="1409.5" y="584.5" width="10" height="10" rx="1.5" fill="#f4f4f4" stroke="#a8a8a8" stroke-width="1.3"/><path d="M1411.5 589.5H1417.5" stroke="#3c5a9a" stroke-width="1.3"/><path d="M1414.5 586.5V592.5" stroke="#3c5a9a" stroke-width="1.3"/><path d="M1420 609.5H1427" stroke="#a8a8a8" stroke-width="1.1" stroke-dasharray="1.25 1.25"/><rect x="1409.5" y="604.5" width="10" height="10" rx="1.5" fill="#f4f4f4" stroke="#a8a8a8" stroke-width="1.3"/><path d="M1411.5 609.5H1417.5" stroke="#3c5a9a" stroke-width="1.3"/><path d="M1414.5 606.5V612.5" stroke="#3c5a9a" stroke-width="1.3"/><path d="M1420 629.5H1427" stroke="#a8a8a8" stroke-width="1.1" stroke-dasharray="1.25 1.25"/><rect x="1409.5" y="624.5" width="10" height="10" rx="1.5" fill="#f4f4f4" stroke="#a8a8a8" stroke-width="1.3"/><path d="M1411.5 629.5H1417.5" stroke="#3c5a9a" stroke-width="1.3"/><path d="M1414.5 626.5V632.5" stroke="#3c5a9a" stroke-width="1.3"/><path d="M1420 649.5H1427" stroke="#a8a8a8" stroke-width="1.1" stroke-dasharray="1.25 1.25"/><rect x="1409.5" y="644.5" width="10" height="10" rx="1.5" fill="#f4f4f4" stroke="#a8a8a8" stroke-width="1.3"/><path d="M1411.5 649.5H1417.5" stroke="#3c5a9a" stroke-width="1.3"/><path d="M1414.5 646.5V652.5" stroke="#3c5a9a" stroke-width="1.3"/><path d="M1420 669.5H1427" stroke="#a8a8a8" stroke-width="1.1" stroke-dasharray="1.25 1.25"/><rect x="1409.5" y="664.5" width="10" height="10" rx="1.5" fill="#f4f4f4" stroke="#a8a8a8" stroke-width="1.3"/><path d="M1411.5 669.5H1417.5" stroke="#3c5a9a" stroke-width="1.3"/><path d="M1414.5 666.5V672.5" stroke="#3c5a9a" stroke-width="1.3"/></svg>
<div class="t" style="left:30.50px;top:4.20px;font-size:13px;letter-spacing:0.110px;">EtherCAT Devices</div>
<div class="t" style="left:54.50px;top:24.20px;font-size:13px;letter-spacing:0.224px;">Inovance Devices</div>
<div class="t" style="left:54.50px;top:44.20px;font-size:13px;letter-spacing:0.220px;">Other Devices</div>
<div class="t" style="left:30.50px;top:64.20px;font-size:13px;letter-spacing:0.034px;">Expansion module</div>
<div class="t" style="left:54.50px;top:84.20px;font-size:13px;letter-spacing:-0.123px;">Local module</div>
<div class="t" style="left:54.50px;top:104.20px;font-size:13px;letter-spacing:0.105px;">Expansion card</div>
<div class="t" style="left:30.50px;top:124.20px;font-size:13px;letter-spacing:0.250px;">EtherNet/IP Devices</div>
<div class="t" style="left:54.50px;top:144.20px;font-size:13px;letter-spacing:0.224px;">Inovance Devices</div>
<div class="t" style="left:54.50px;top:164.20px;font-size:13px;letter-spacing:0.220px;">Other Devices</div>
<div class="t" style="left:30.50px;top:184.20px;font-size:13px;letter-spacing:0.459px;">Instruction Set</div>
<div class="t" style="left:54.50px;top:204.20px;font-size:13px;letter-spacing:-0.174px;">Basic logic</div>
<div class="t" style="left:54.50px;top:224.20px;font-size:13px;letter-spacing:0.221px;">Flow control</div>
<div class="t" style="left:54.50px;top:244.20px;font-size:13px;letter-spacing:0.250px;">Contacts load</div>
<div class="t" style="left:54.50px;top:264.20px;font-size:13px;letter-spacing:0.272px;">Data computation</div>
<div class="t" style="left:54.50px;top:284.20px;font-size:13px;letter-spacing:0.148px;">Data processing</div>
<div class="t" style="left:54.50px;top:304.20px;font-size:13px;letter-spacing:0.328px;">Matrix</div>
<div class="t" style="left:54.50px;top:324.20px;font-size:13px;letter-spacing:0.128px;">Strings</div>
<div class="t" style="left:54.50px;top:344.20px;font-size:13px;letter-spacing:-0.191px;">Clock</div>
<div class="t" style="left:54.50px;top:364.20px;font-size:13px;letter-spacing:0.15px">MC axis control(EtherCAT &amp; Pulse output)</div>
<div class="t" style="left:54.50px;top:384.20px;font-size:13px;letter-spacing:0.129px;">MC axis control(CANopen)</div>
<div class="t" style="left:54.50px;top:404.20px;font-size:13px;letter-spacing:0.143px;">HC axis control(Pulse input)</div>
<div class="t" style="left:54.50px;top:424.20px;font-size:13px;letter-spacing:-0.132px;">Timers</div>
<div class="t" style="left:54.50px;top:444.20px;font-size:13px;letter-spacing:0.148px;">Pointer</div>
</div>
<div style="position:absolute;left:1372px;top:706px;width:311px;height:91px;border:1px solid #b8b8b8;box-sizing:border-box"></div>
<div style="position:absolute;left:1374px;top:709px;width:306px;height:85px;border:1px solid #d0d0d0;box-sizing:border-box"></div>
<div class="t" style="left:1380.00px;top:715.00px;font-size:13px;letter-spacing:0.185px;color:#6d6d6d;">Show selected information!</div>
<div class="t" style="left:4.75px;top:810.10px;font-size:15px;letter-spacing:0.883px;">Information Output Window</div>
<svg style="left:0;top:0" width="1683" height="1019" viewBox="0 0 1683 1019"><path d="M1648.5 814.5H1653.5M1649.5 815V820M1652.5 815V820M1647 820.5H1655M1651 820.5V824" fill="none" stroke="#000" stroke-width="1.6"/><path d="M1666 814.5L1676 823.5M1676 814.5L1666 823.5" stroke="#000" stroke-width="1.8"/></svg>
<div style="position:absolute;left:2px;top:838px;width:1681px;height:127px;background:#707070"></div>
<div style="position:absolute;left:4px;top:840px;width:1679px;height:125px;background:#8a8a8a"></div>
<div style="position:absolute;left:6px;top:842px;width:1673px;height:122px;background:#fff"></div>
<div style="position:absolute;left:1679px;top:838px;width:4px;height:127px;background:#d8d8d8"></div>
<div style="position:absolute;left:6px;top:842px;width:65px;height:20px;background:#0080ff"></div>
<div style="position:absolute;left:71px;top:842px;width:1585px;height:20px;background:#f0f0f0"></div>
<div style="position:absolute;left:6px;top:864px;width:65px;height:20px;background:#0080ff"></div>
<div style="position:absolute;left:6px;top:863px;width:65px;height:1px;background:#f4f4f4"></div>
<div style="position:absolute;left:6px;top:862px;width:1650px;height:1px;background:#a0a0a0"></div>
<div style="position:absolute;left:6px;top:886px;width:65px;height:20px;background:#0080ff"></div>
<div style="position:absolute;left:6px;top:885px;width:65px;height:1px;background:#f4f4f4"></div>
<div style="position:absolute;left:6px;top:884px;width:1650px;height:1px;background:#a0a0a0"></div>
<div style="position:absolute;left:6px;top:908px;width:65px;height:19px;background:#0080ff"></div>
<div style="position:absolute;left:6px;top:907px;width:65px;height:1px;background:#f4f4f4"></div>
<div style="position:absolute;left:6px;top:906px;width:1650px;height:1px;background:#a0a0a0"></div>
<div style="position:absolute;left:6px;top:929px;width:65px;height:19px;background:#0080ff"></div>
<div style="position:absolute;left:6px;top:928px;width:65px;height:1px;background:#f4f4f4"></div>
<div style="position:absolute;left:6px;top:927px;width:1650px;height:1px;background:#a0a0a0"></div>
<div style="position:absolute;left:6px;top:950px;width:65px;height:14px;background:#0080ff"></div>
<div style="position:absolute;left:6px;top:949px;width:65px;height:1px;background:#f4f4f4"></div>
<div style="position:absolute;left:6px;top:948px;width:1650px;height:1px;background:#a0a0a0"></div>
<div style="position:absolute;left:70px;top:842px;width:1px;height:122px;background:#a0a0a0"></div>
<div style="position:absolute;left:229px;top:842px;width:1px;height:122px;background:#a0a0a0"></div>
<div style="position:absolute;left:329px;top:842px;width:1px;height:122px;background:#a0a0a0"></div>
<div style="position:absolute;left:445px;top:842px;width:1px;height:122px;background:#a0a0a0"></div>
<div style="position:absolute;left:612px;top:842px;width:1px;height:122px;background:#a0a0a0"></div>
<div style="position:absolute;left:1656px;top:842px;width:1px;height:122px;background:#a0a0a0"></div>
<div style="position:absolute;left:95px;top:862px;width:1px;height:102px;background:#a0a0a0"></div>
<div style="position:absolute;left:71px;top:863px;width:24px;height:20px;background:#0060d0"></div>
<div class="t" style="left:75.00px;top:844.62px;font-size:15.5px;font-family:'Liberation Mono',monospace;transform:scaleX(0.8065);transform-origin:0 0;-webkit-text-stroke:0.15px currentColor;">Element Name</div>
<div class="t" style="left:233.80px;top:844.62px;font-size:15.5px;font-family:'Liberation Mono',monospace;transform:scaleX(0.8065);transform-origin:0 0;-webkit-text-stroke:0.15px currentColor;">Data Type</div>
<div class="t" style="left:333.60px;top:844.62px;font-size:15.5px;font-family:'Liberation Mono',monospace;transform:scaleX(0.8065);transform-origin:0 0;-webkit-text-stroke:0.15px currentColor;">Display Format</div>
<div class="t" style="left:449.70px;top:844.62px;font-size:15.5px;font-family:'Liberation Mono',monospace;transform:scaleX(0.8065);transform-origin:0 0;-webkit-text-stroke:0.15px currentColor;">Current Value</div>
<div class="t" style="left:616.00px;top:844.62px;font-size:15.5px;font-family:'Liberation Mono',monospace;transform:scaleX(0.8065);transform-origin:0 0;-webkit-text-stroke:0.15px currentColor;">Comment</div>
<div class="t" style="left:16.00px;top:868.50px;font-size:13px;">1</div>
<svg style="left:0;top:0" width="1683" height="1019" viewBox="0 0 1683 1019"><rect x="76.3" y="878.3" width="1.5" height="1.5" fill="#fff"/><rect x="84" y="878.3" width="1.5" height="1.5" fill="#fff"/><rect x="91.7" y="878.3" width="1.5" height="1.5" fill="#fff"/></svg>
<div class="t" style="left:16.00px;top:890.50px;font-size:13px;">2</div>
<svg style="left:0;top:0" width="1683" height="1019" viewBox="0 0 1683 1019"><rect x="76.3" y="900.3" width="1.5" height="1.5" fill="#000"/><rect x="84" y="900.3" width="1.5" height="1.5" fill="#000"/><rect x="91.7" y="900.3" width="1.5" height="1.5" fill="#000"/></svg>
<div class="t" style="left:16.00px;top:912.50px;font-size:13px;">3</div>
<svg style="left:0;top:0" width="1683" height="1019" viewBox="0 0 1683 1019"><rect x="76.3" y="922.3" width="1.5" height="1.5" fill="#000"/><rect x="84" y="922.3" width="1.5" height="1.5" fill="#000"/><rect x="91.7" y="922.3" width="1.5" height="1.5" fill="#000"/></svg>
<div class="t" style="left:16.00px;top:933.50px;font-size:13px;">4</div>
<svg style="left:0;top:0" width="1683" height="1019" viewBox="0 0 1683 1019"><rect x="76.3" y="943.3" width="1.5" height="1.5" fill="#000"/><rect x="84" y="943.3" width="1.5" height="1.5" fill="#000"/><rect x="91.7" y="943.3" width="1.5" height="1.5" fill="#000"/></svg>
<div class="t" style="left:16.00px;top:954.50px;font-size:13px;">5</div>
<div style="position:absolute;left:1657px;top:842px;width:22px;height:122px;background:#f0f0f0"></div>
<div style="position:absolute;left:1658px;top:863px;width:18px;height:71px;background:#cdcdcd"></div>
<svg style="left:0;top:0" width="1683" height="1019" viewBox="0 0 1683 1019"><path d="M1662.7 855.15L1667 850.85L1671.3 855.15" fill="none" stroke="#555" stroke-width="2"/><path d="M1662.7 948.85L1667 953.15L1671.3 948.85" fill="none" stroke="#555" stroke-width="2"/></svg>
<div style="position:absolute;left:2px;top:964px;width:1681px;height:1px;background:#303030"></div>
<div style="position:absolute;left:0px;top:965px;width:1683px;height:23px;background:#f0f0f0"></div>
<svg style="left:0;top:0" width="1683" height="1019" viewBox="0 0 1683 1019"><rect x="3.5" y="968.5" width="15" height="15" fill="#f4f4f4" stroke="#e0e0e0"/><path d="M18.5 968.5V983.5H3.5" fill="none" stroke="#909090"/><rect x="23.5" y="968.5" width="15" height="15" fill="#f4f4f4" stroke="#e0e0e0"/><path d="M38.5 968.5V983.5H23.5" fill="none" stroke="#909090"/><rect x="43.5" y="968.5" width="15" height="15" fill="#f4f4f4" stroke="#e0e0e0"/><path d="M58.5 968.5V983.5H43.5" fill="none" stroke="#909090"/><rect x="63.5" y="968.5" width="15" height="15" fill="#f4f4f4" stroke="#e0e0e0"/><path d="M78.5 968.5V983.5H63.5" fill="none" stroke="#909090"/><path d="M8.5 972V980" stroke="#000" stroke-width="1.5"/><path d="M15 972L10 976L15 980Z" fill="#000"/><path d="M34 972L29 976L34 980Z" fill="#000"/><path d="M48 972L53 976L48 980Z" fill="#000"/><path d="M67 972L72 976L67 980Z" fill="#000"/><path d="M73.5 972V980" stroke="#000" stroke-width="1.5"/><path d="M84.5 965.5L93.5 984.5H160.5L169.5 965.5" fill="none" stroke="#000" stroke-width="1"/><path d="M169.5 965.5L178.5 984.5H292L301 965.5" fill="none" stroke="#000" stroke-width="1"/><path d="M301 965.5L310 984.5H399L408 965.5" fill="none" stroke="#000" stroke-width="1"/><path d="M408 965.5L417 984.5H519L528 965.5" fill="none" stroke="#000" stroke-width="1"/><path d="M528 965.5L537 984.5H627L636 965.5" fill="#fff" stroke="#000" stroke-width="1"/></svg>
<div class="t" style="left:99.80px;top:967.39px;font-size:14.5px;font-family:'Liberation Mono',monospace;transform:scaleX(0.862);transform-origin:0 0;-webkit-text-stroke:0.1px currentColor;">Compile</div>
<div class="t" style="left:181.00px;top:967.39px;font-size:14.5px;font-family:'Liberation Mono',monospace;transform:scaleX(0.862);transform-origin:0 0;-webkit-text-stroke:0.1px currentColor;">Communications</div>
<div class="t" style="left:318.20px;top:967.39px;font-size:14.5px;font-family:'Liberation Mono',monospace;transform:scaleX(0.862);transform-origin:0 0;-webkit-text-stroke:0.1px currentColor;">Conversion</div>
<div class="t" style="left:422.20px;top:967.39px;font-size:14.5px;font-family:'Liberation Mono',monospace;transform:scaleX(0.862);transform-origin:0 0;-webkit-text-stroke:0.1px currentColor;">Find Results</div>
<div class="t" style="left:536.60px;top:967.39px;font-size:14.5px;letter-spacing:2.457px;font-family:'Liberation Mono',monospace;font-weight:bold;transform:scaleX(0.8065);transform-origin:0 0;">Monitoring</div>
<div style="position:absolute;left:857px;top:967px;width:4px;height:17px;border:1px solid #808080;box-sizing:border-box;background:#fff"></div>
<div style="position:absolute;left:883px;top:967px;width:160px;height:17px;background:#cdcdcd"></div>
<svg style="left:0;top:0" width="1683" height="1019" viewBox="0 0 1683 1019"><path d="M874.25 971.0L869.75 975.5L874.25 980.0" fill="none" stroke="#404040" stroke-width="1.8"/><path d="M1646.75 971.0L1651.25 975.5L1646.75 980.0" fill="none" stroke="#404040" stroke-width="1.8"/></svg>
<div style="position:absolute;left:1681px;top:965px;width:1px;height:23px;background:#a0a0a0"></div>
<div style="position:absolute;left:0px;top:987px;width:1683px;height:1px;background:#a0a0a0"></div>
<div style="position:absolute;left:0px;top:988px;width:1683px;height:1px;background:#fff"></div>
<div class="t" style="left:4.75px;top:997.18px;font-size:15.5px;letter-spacing:-0.124px;">Ready</div>
<div class="t" style="left:568.80px;top:997.18px;font-size:15.5px;letter-spacing:0.198px;">Current status of PLC</div>
<svg style="left:0;top:0" width="1683" height="1019" viewBox="0 0 1683 1019"><defs><linearGradient id="rb" x1="0" y1="0" x2="1" y2="1"><stop offset="0" stop-color="#fff8f0"/><stop offset=".45" stop-color="#f0b0b0"/><stop offset=".55" stop-color="#e86060"/><stop offset="1" stop-color="#d02020"/></linearGradient><linearGradient id="gb" x1="0" y1="0" x2="1" y2="1"><stop offset="0" stop-color="#e8f4e0"/><stop offset=".45" stop-color="#a8d8a0"/><stop offset=".55" stop-color="#70c080"/><stop offset="1" stop-color="#30a050"/></linearGradient></defs><circle cx="731.6" cy="1004" r="6.6" fill="url(#rb)" stroke="#303030" stroke-width="1.2"/><circle cx="876.5" cy="1004" r="6.6" fill="url(#gb)" stroke="#303030" stroke-width="1.2"/></svg>
<div class="t" style="left:765.40px;top:997.18px;font-size:15.5px;letter-spacing:0.094px;">Failure status</div>
<div style="position:absolute;left:901px;top:992px;width:334px;height:25px;background:#0000ff"></div>
<div class="t" style="left:903.50px;top:997.18px;font-size:15.5px;letter-spacing:0.015px;color:#fff;">[Easy521] Version:6.1.0.1 Scan cycle:10.1 ms</div>
<div style="position:absolute;left:1240px;top:992px;width:178px;height:25px;background:#0000ff"></div>
<div class="t" style="left:1242.00px;top:997.18px;font-size:15.5px;letter-spacing:0.180px;color:#fff;">CPU:1%  Memory:26%</div>
<div style="position:absolute;left:1420px;top:992px;width:68px;height:25px;border-left:1px solid #a0a0a0;border-top:1px solid #a0a0a0;border-right:1px solid #fff;box-sizing:border-box"></div>
<div class="t" style="left:1424.30px;top:997.18px;font-size:15.5px;letter-spacing:0.042px;">Rewrite</div>
<div style="position:absolute;left:1491px;top:992px;width:192px;height:25px;border-left:1px solid #a0a0a0;border-top:1px solid #a0a0a0;box-sizing:border-box"></div>
<div style="position:absolute;left:0px;top:1017px;width:1683px;height:2px;background:#101010"></div>
</body></html>
